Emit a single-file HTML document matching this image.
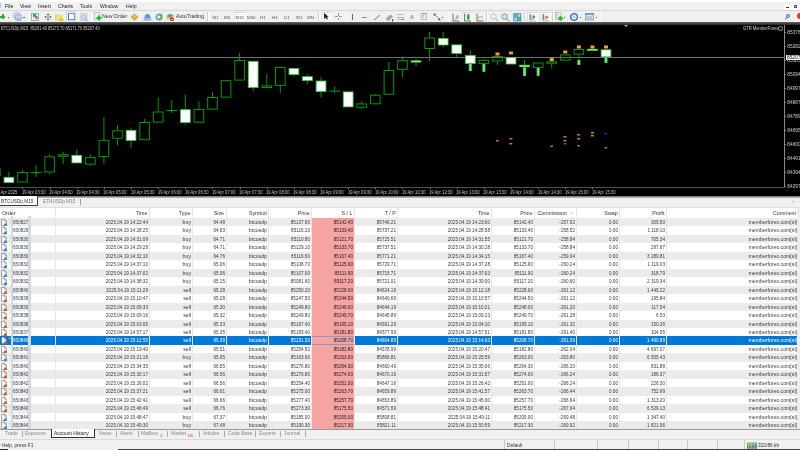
<!DOCTYPE html>
<html><head><meta charset="utf-8">
<style>
*{margin:0;padding:0;box-sizing:border-box}
html,body{width:800px;height:450px;overflow:hidden;background:#f0f0f0;font-family:"Liberation Sans", sans-serif;position:relative}
#root{position:absolute;left:0;top:0;width:800px;height:450px;overflow:hidden;will-change:transform}
.a{position:absolute}
#menu{position:absolute;left:0;top:0;width:800px;height:10.3px;background:linear-gradient(#fff 0,#fff 1.5px,#f0f0f0 2.5px)}
.mi{position:absolute;top:2.9px;font-size:5.6px;color:#1a1a1a;white-space:nowrap;transform:scaleX(0.92);transform-origin:0 0}
#tb{position:absolute;left:0;top:10.3px;width:800px;height:11.7px;background:#f0f0f0;border-top:0.8px solid #d6d6d6}
#frame{position:absolute;left:0;top:21.8px;width:800px;height:2.8px;background:linear-gradient(#6a6a6a,#3a3a3a 60%,#2a2a2a)}
#chart{position:absolute;left:0;top:24.6px;width:800px;height:171px;background:#000;overflow:hidden}
#chart svg{position:absolute;left:0;top:-24.6px}
.tlab{position:absolute;top:165.1px;font-size:4.6px;color:#c8c8c8;white-space:nowrap;transform:scaleX(0.9);transform-origin:0 0}
.tick{position:absolute;top:163px;width:0.8px;height:1.5px;background:#888}
.plab{position:absolute;left:787.3px;font-size:4.8px;color:#c8ccd0;white-space:nowrap}
.ptick{position:absolute;left:785px;width:1.3px;height:0.8px;background:#888}
#ctabs{position:absolute;left:0;top:195.5px;width:800px;height:11.5px;background:#f0f0f0}
.hd{position:absolute;height:10px;line-height:11.8px;font-size:5.3px;color:#333;text-align:right;white-space:nowrap}
.hsep{position:absolute;top:208px;width:0.7px;height:10px;background:#e6e6e6}
.vsep{position:absolute;top:218px;width:0.7px;height:211px;background:#e6e6e6}
.row{position:absolute;left:0;width:797.2px;height:8.46px}
.sl{position:absolute;left:311.6px;width:42px;height:8.46px;background:#f6a3a3}
.cell{position:absolute;height:8.5px;line-height:9.5px;font-size:5.3px;text-align:right;white-space:nowrap;transform:scaleX(0.87);transform-origin:100% 50%}
.doc{position:absolute;left:1.4px;width:4.4px;height:5.8px;background:#fff;border:0.7px solid #777}
.dot{position:absolute;left:3.6px;width:3px;height:3px;border-radius:50%}
.gbar{position:absolute;top:216.4px;height:212.5px;background:#d8d8d8}
.filt{position:absolute;font-size:4px;color:#999}
#btabs{position:absolute;left:0;top:428.7px;width:800px;height:10.3px;background:#f0f0f0;border-top:0.9px solid #9a9a9a}
.bt{position:absolute;top:430.4px;font-size:5.4px;color:#8a8a8a;white-space:nowrap;transform:scaleX(0.92);transform-origin:0 0}
.bsep{position:absolute;top:430.5px;width:0.7px;height:6px;background:#aaa}
#status{position:absolute;left:0;top:439px;width:800px;height:11px;background:#f0f0f0;border-top:0.7px solid #dadada}
.ssep{position:absolute;top:440px;width:0.7px;height:9px;background:#c8c8c8}
.st{position:absolute;top:441.8px;font-size:5.2px;color:#333;white-space:nowrap;transform:scaleX(0.93);transform-origin:0 0}
</style></head><body><div id="root">
<div id="menu"></div>
<div class="a" style="left:0;top:3px;width:1px;height:5px;background:#a8c8e8"></div><div class="mi" style="left:4.8px">File</div>
<div class="mi" style="left:19.8px">View</div>
<div class="mi" style="left:38px">Insert</div>
<div class="mi" style="left:58px">Charts</div>
<div class="mi" style="left:80px">Tools</div>
<div class="mi" style="left:99.5px">Window</div>
<div class="mi" style="left:125.5px">Help</div>
<div class="a" style="left:784px;top:4px;width:6.5px;height:5.5px;background:#fff"></div>
<div class="a" style="left:786px;top:7.2px;width:2.5px;height:0.8px;background:#333"></div>
<div class="a" style="left:792px;top:4px;width:7px;height:5.5px;background:#fff"></div>
<div class="a" style="left:794px;top:5.2px;width:3px;height:2.8px;border:0.7px solid #555"></div>
<div id="tb"></div>
<div class="a" style="left:0px;top:15.5px;width:5px;height:2px;background:#2cb52c;"></div><div class="a" style="left:1.5px;top:14px;width:2px;height:5px;background:#2cb52c;"></div><div class="a" style="left:7.5px;top:16.5px;width:1.5px;height:1.2px;background:#555;"></div><svg class="a" style="left:12.5px;top:12px" width="9" height="9"><rect x="0.8" y="0.8" width="5.5" height="5" rx="0.8" fill="#d8e6f4" stroke="#7aa0d0" stroke-width="0.6"/><rect x="2.5" y="2.8" width="5.8" height="5.6" rx="0.8" fill="#c4d8ee" stroke="#6a90c8" stroke-width="0.6"/><rect x="3.5" y="6" width="3.8" height="1.4" fill="#90b0d8"/></svg><div class="a" style="left:23px;top:16.5px;width:1.5px;height:1.2px;background:#555;"></div><div class="a" style="left:28.5px;top:12.3px;width:0.6px;height:8.5px;background:#cfcfcf;"></div><div class="a" style="left:29.1px;top:12.3px;width:0.6px;height:8.5px;background:#fdfdfd;"></div><div class="a" style="left:31px;top:12.5px;width:7.5px;height:8px;background:#e6eff8;border:0.7px solid #8ab0de"></div><div class="a" style="left:33px;top:14px;width:2.5px;height:2.5px;background:#3a3;"></div><div class="a" style="left:35px;top:16px;width:3px;height:3px;background:#e06030;border-radius:50%"></div><svg class="a" style="left:43.5px;top:12.5px" width="8" height="8"><path d="M4 0.3 L5.6 2 H2.4 Z M4 7.7 L5.6 6 H2.4 Z M0.3 4 L2 2.4 V5.6 Z M7.7 4 L6 2.4 V5.6 Z" fill="#666"/><path d="M4 2 V6 M2 4 H6" stroke="#888" stroke-width="0.8"/></svg><svg class="a" style="left:54.5px;top:12.5px" width="10" height="9"><path d="M0.5 1.5 H3 L4 2.5 H7 V7 H0.5 Z" fill="#f4e27a" stroke="#d8b840" stroke-width="0.5"/><path d="M6.5 4 L7.3 5.8 L9.2 6 L7.8 7.2 L8.2 9 L6.5 8 L4.8 9 L5.2 7.2 L3.8 6 L5.7 5.8 Z" fill="#f0c820"/></svg><div class="a" style="left:66px;top:11.3px;width:10.2px;height:9.8px;background:#f7f7f7;border:0.6px solid #d4d4d4"></div><div class="a" style="left:67.5px;top:12.8px;width:7.5px;height:7.5px;background:#f4f8ff;border:0.8px solid #6a9ad8;border-left:1.6px solid #3a78c8"></div><svg class="a" style="left:79.5px;top:12.5px" width="9" height="9"><rect x="0.5" y="0.5" width="6.5" height="7" fill="#eceef0" stroke="#b0b4b8" stroke-width="0.5"/><circle cx="3.8" cy="4.2" r="2.2" fill="#cfe2f6" stroke="#6a9ad0" stroke-width="0.6"/><path d="M5.4 5.8 L7.8 8.2" stroke="#d0a040" stroke-width="1"/></svg><div class="a" style="left:90.5px;top:12.3px;width:0.6px;height:8.5px;background:#cfcfcf;"></div><div class="a" style="left:91.1px;top:12.3px;width:0.6px;height:8.5px;background:#fdfdfd;"></div><svg class="a" style="left:93.5px;top:12.3px" width="9" height="9"><rect x="0.5" y="0.5" width="5.5" height="7" fill="#f0f0f0" stroke="#999" stroke-width="0.5"/><path d="M5 3.5 V8.5 M2.5 6 H7.5" stroke="#22c022" stroke-width="2"/></svg><div class="a" style="left:102px;top:13.4px;font-size:5.6px;color:#333;white-space:nowrap;transform:scaleX(0.93);transform-origin:0 0">New Order</div><svg class="a" style="left:130px;top:12.5px" width="9" height="8"><path d="M1 4 L4.5 1 L8 4 L4.5 7.5 Z" fill="#e0b030" stroke="#b08020" stroke-width="0.5"/><path d="M2.5 4 L4.5 2.5 L6.5 4" fill="none" stroke="#fff0a0" stroke-width="0.6"/></svg><svg class="a" style="left:143px;top:12.5px" width="9" height="8"><path d="M1.5 5 Q1.5 1 4.5 1 Q7.5 1 7.5 5 Z" fill="#4aa0e8"/><rect x="0.8" y="5" width="7.4" height="2.4" rx="1" fill="#b8c0cc" stroke="#8890a0" stroke-width="0.4"/></svg><svg class="a" style="left:154.5px;top:12.5px" width="9" height="8"><circle cx="4" cy="4" r="3.5" fill="#7fa8d8"/><path d="M4 0.5 A3.5 3.5 0 0 1 4 7.5 Z" fill="#5ab05a"/><circle cx="4" cy="4" r="1.5" fill="#e8f0f8"/></svg><svg class="a" style="left:166px;top:12.5px" width="9" height="9"><path d="M0.5 3 L4 0.8 L7.5 2.5 L7.5 6.5 L0.5 6.5 Z" fill="#e8c840"/><path d="M0.5 3 L4 0.8 L7.5 2.5 L4 4.5 Z" fill="#4a9ae0"/><circle cx="6" cy="6.3" r="2" fill="#d83020"/><rect x="5" y="6" width="2" height="0.6" fill="#fff"/></svg><div class="a" style="left:176px;top:13.4px;font-size:5.6px;color:#333;white-space:nowrap;transform:scaleX(0.93);transform-origin:0 0">AutoTrading</div><div class="a" style="left:207.3px;top:12.3px;width:0.6px;height:8.5px;background:#cfcfcf;"></div><div class="a" style="left:207.9px;top:12.3px;width:0.6px;height:8.5px;background:#fdfdfd;"></div><div class="a" style="left:208.7px;top:12.3px;width:0.6px;height:8.5px;background:#cfcfcf;"></div><div class="a" style="left:209.29999999999998px;top:12.3px;width:0.6px;height:8.5px;background:#fdfdfd;"></div><div class="a" style="left:212.5px;top:14.8px;font-size:4.4px;color:#555;white-space:nowrap;transform:scaleX(1);transform-origin:0 0">M1</div><div class="a" style="left:224px;top:14.8px;font-size:4.4px;color:#555;white-space:nowrap;transform:scaleX(1);transform-origin:0 0">M5</div><div class="a" style="left:234px;top:11.5px;width:11.5px;height:9.5px;background:#f8f8f8;border-top:0.6px solid #d8d8d8;border-left:0.5px solid #e0e0e0"></div><div class="a" style="left:235.5px;top:14.8px;font-size:4.4px;color:#555;white-space:nowrap;transform:scaleX(1);transform-origin:0 0">M15</div><div class="a" style="left:247px;top:14.8px;font-size:4.4px;color:#555;white-space:nowrap;transform:scaleX(1);transform-origin:0 0">M30</div><div class="a" style="left:260px;top:14.8px;font-size:4.4px;color:#555;white-space:nowrap;transform:scaleX(1);transform-origin:0 0">H1</div><div class="a" style="left:272px;top:14.8px;font-size:4.4px;color:#555;white-space:nowrap;transform:scaleX(1);transform-origin:0 0">H4</div><div class="a" style="left:284px;top:14.8px;font-size:4.4px;color:#555;white-space:nowrap;transform:scaleX(1);transform-origin:0 0">D1</div><div class="a" style="left:296px;top:14.8px;font-size:4.4px;color:#555;white-space:nowrap;transform:scaleX(1);transform-origin:0 0">W1</div><div class="a" style="left:307px;top:14.8px;font-size:4.4px;color:#555;white-space:nowrap;transform:scaleX(1);transform-origin:0 0">MN</div><div class="a" style="left:318.3px;top:12.3px;width:0.6px;height:8.5px;background:#cfcfcf;"></div><div class="a" style="left:318.90000000000003px;top:12.3px;width:0.6px;height:8.5px;background:#fdfdfd;"></div><div class="a" style="left:319.7px;top:12.3px;width:0.6px;height:8.5px;background:#cfcfcf;"></div><div class="a" style="left:320.3px;top:12.3px;width:0.6px;height:8.5px;background:#fdfdfd;"></div><div class="a" style="left:321px;top:11.5px;width:10.5px;height:9.5px;background:#f8f8f8;border-top:0.6px solid #dadada;border-left:0.5px solid #e0e0e0"></div><svg class="a" style="left:323px;top:13px" width="6" height="7"><path d="M1 0 L1 6 L2.5 4.5 L4 6.5 L5 6 L3.8 4 L5.5 3.8 Z" fill="#222"/></svg><div class="a" style="left:335px;top:16.3px;width:2.6px;height:0.8px;background:#999;"></div><div class="a" style="left:339.4px;top:16.3px;width:2.6px;height:0.8px;background:#999;"></div><div class="a" style="left:338.1px;top:13.3px;width:0.8px;height:2.6px;background:#999;"></div><div class="a" style="left:338.1px;top:17.6px;width:0.8px;height:2.6px;background:#999;"></div><div class="a" style="left:345.5px;top:12.3px;width:0.6px;height:8.5px;background:#cfcfcf;"></div><div class="a" style="left:346.1px;top:12.3px;width:0.6px;height:8.5px;background:#fdfdfd;"></div><div class="a" style="left:352.2px;top:14.2px;width:0.8px;height:5.8px;background:#666;"></div><div class="a" style="left:362.3px;top:16.8px;width:5px;height:0.8px;background:#888;"></div><svg class="a" style="left:373px;top:13.5px" width="8" height="7"><path d="M1 6 L7 1" stroke="#555" stroke-width="0.8"/></svg><svg class="a" style="left:384.5px;top:12.5px" width="9" height="9"><path d="M0.5 6 L5 1.5 L8 3.5 L3.5 8 Z" fill="#9a9a9a"/><path d="M1.5 5.5 L5 2 M3 7 L6.5 3.5" stroke="#ddd" stroke-width="0.5"/><rect x="7" y="6" width="1.2" height="2.5" fill="#555"/></svg><div class="a" style="left:397px;top:14px;width:6.5px;height:0.8px;background:#c0c0c0;"></div><div class="a" style="left:397px;top:16.5px;width:6.5px;height:0.8px;background:#b0b0b0;"></div><div class="a" style="left:397px;top:19px;width:5px;height:0.8px;background:#c0c0c0;"></div><div class="a" style="left:402px;top:18.5px;width:1.5px;height:1.5px;background:#666;"></div><div class="a" style="left:410px;top:13.5px;font-size:5.2px;color:#666;white-space:nowrap;transform:scaleX(1);transform-origin:0 0">A</div><div class="a" style="left:421px;top:13.3px;width:6px;height:6.5px;background:#f0f0f0;border:0.6px solid #bbb;border-top:0.6px solid #999"></div><div class="a" style="left:422.6px;top:14.2px;font-size:4.4px;color:#777;white-space:nowrap;transform:scaleX(1);transform-origin:0 0">T</div><svg class="a" style="left:432.5px;top:12.5px" width="8" height="8"><path d="M1.2 1.2 L6.8 6.8" stroke="#888" stroke-width="1"/><path d="M0.5 0.5 L3 1 L1 3 Z M7.5 7.5 L5 7 L7 5 Z" fill="#444"/></svg><div class="a" style="left:441.8px;top:16.6px;width:1.3px;height:1.3px;background:#444;"></div><div class="a" style="left:447.5px;top:12.3px;width:0.6px;height:8.5px;background:#cfcfcf;"></div><div class="a" style="left:448.1px;top:12.3px;width:0.6px;height:8.5px;background:#fdfdfd;"></div><svg class="a" style="left:451.5px;top:12.5px" width="8" height="9"><path d="M1 0.5 V8 H7.5" fill="none" stroke="#555" stroke-width="0.8"/><path d="M3.5 6.5 L5.5 2 M5 6 L6.5 3" stroke="#4ab04a" stroke-width="0.8"/></svg><div class="a" style="left:462px;top:11.5px;width:10.5px;height:9.5px;background:#f8f8f8;border-top:0.6px solid #dadada;border-left:0.5px solid #e0e0e0"></div><svg class="a" style="left:462.5px;top:12.5px" width="9" height="9"><path d="M1.5 0.5 V8 H8" fill="none" stroke="#555" stroke-width="0.8"/><rect x="3.8" y="1.5" width="2.8" height="5" fill="#30b030"/><path d="M5.2 0.5 V7.5" stroke="#30b030" stroke-width="0.6"/></svg><svg class="a" style="left:475.5px;top:12.5px" width="8" height="9"><path d="M1 0.5 V8 H7.5" fill="none" stroke="#555" stroke-width="0.8"/><path d="M2 6 Q3.5 1 7 5" fill="none" stroke="#4ab04a" stroke-width="0.7"/></svg><div class="a" style="left:486px;top:12.3px;width:0.6px;height:8.5px;background:#cfcfcf;"></div><div class="a" style="left:486.6px;top:12.3px;width:0.6px;height:8.5px;background:#fdfdfd;"></div><svg class="a" style="left:489.5px;top:12.5px" width="9" height="9"><circle cx="3.5" cy="3.5" r="2.6" fill="#f4f4f4" stroke="#bbb" stroke-width="0.9"/><path d="M5.5 5.5 L8 8" stroke="#bbb" stroke-width="1.1"/></svg><svg class="a" style="left:500.5px;top:12.5px" width="9" height="9"><circle cx="3.6" cy="3.6" r="2.7" fill="#d4e8f8" stroke="#4a90d0" stroke-width="0.9"/><path d="M5.6 5.6 L8.2 8.2" stroke="#d0a030" stroke-width="1.2"/></svg><svg class="a" style="left:512.5px;top:12.5px" width="9" height="9"><rect x="0.3" y="0.3" width="8" height="8" fill="#3a80d0"/><rect x="1" y="1" width="3" height="3" fill="#60c060"/><rect x="4.6" y="1" width="3" height="3" fill="#a8d0f0"/><rect x="1" y="4.6" width="3" height="3" fill="#a8d0f0"/><rect x="4.6" y="4.6" width="3" height="3" fill="#60c060"/></svg><div class="a" style="left:524px;top:12.3px;width:0.6px;height:8.5px;background:#cfcfcf;"></div><div class="a" style="left:524.6px;top:12.3px;width:0.6px;height:8.5px;background:#fdfdfd;"></div><div class="a" style="left:527px;top:11.5px;width:10.5px;height:9.5px;background:#f8f8f8;border-top:0.6px solid #dadada;border-left:0.5px solid #e0e0e0"></div><svg class="a" style="left:528px;top:12.5px" width="9" height="9"><rect x="1.5" y="1" width="1.5" height="6" fill="#888"/><rect x="3.5" y="2.5" width="1.2" height="4.5" fill="#aaa"/><path d="M5 1.5 L7.5 4 L5 6.5 Z" fill="#30b030"/><path d="M1 8 H8" stroke="#999" stroke-width="0.6"/></svg><div class="a" style="left:540px;top:11.5px;width:10.5px;height:9.5px;background:#f8f8f8;border-top:0.6px solid #dadada;border-left:0.5px solid #e0e0e0"></div><svg class="a" style="left:541px;top:12.5px" width="9" height="9"><rect x="1.5" y="1" width="1.5" height="6" fill="#888"/><rect x="3.5" y="2.5" width="1.2" height="4.5" fill="#aaa"/><path d="M5 2.5 L7.8 4.2 L5 6 Z" fill="#e06030"/><path d="M1 8 H8" stroke="#999" stroke-width="0.6"/></svg><div class="a" style="left:552px;top:12.3px;width:0.6px;height:8.5px;background:#cfcfcf;"></div><div class="a" style="left:552.6px;top:12.3px;width:0.6px;height:8.5px;background:#fdfdfd;"></div><svg class="a" style="left:554.5px;top:12.3px" width="9" height="9"><rect x="0.5" y="0.5" width="5.5" height="7" fill="#eee" stroke="#999" stroke-width="0.5"/><path d="M2 1.5 V6" stroke="#888" stroke-width="0.6"/><path d="M5.5 4 V8.8 M3 6.4 H8" stroke="#22c022" stroke-width="2"/></svg><div class="a" style="left:563.5px;top:16.5px;width:1.3px;height:1.3px;background:#555;"></div><svg class="a" style="left:569.5px;top:12.5px" width="9" height="9"><circle cx="4" cy="4" r="3.4" fill="#dceaf8" stroke="#2a70c0" stroke-width="1.3"/><path d="M4 2.5 V4.2 L5 5" stroke="#666" stroke-width="0.5" fill="none"/></svg><div class="a" style="left:579.5px;top:16.5px;width:1.3px;height:1.3px;background:#555;"></div><svg class="a" style="left:585px;top:12.8px" width="9" height="8"><rect x="0.5" y="0.5" width="8" height="6.5" fill="#d8e8f8" stroke="#5a90d0" stroke-width="0.7"/><rect x="0.5" y="0.5" width="8" height="1.3" fill="#5a90d0"/><path d="M1.5 4 L3 3 L4.5 4.5 L7.5 3" stroke="#e06060" stroke-width="0.5" fill="none"/><path d="M1.5 5.5 L4 5 L7.5 5.5" stroke="#40a040" stroke-width="0.5" fill="none"/></svg><div class="a" style="left:595.5px;top:16.5px;width:1.3px;height:1.3px;background:#555;"></div><div class="a" style="left:599.5px;top:12.3px;width:0.6px;height:8.5px;background:#cfcfcf;"></div><div class="a" style="left:600.1px;top:12.3px;width:0.6px;height:8.5px;background:#fdfdfd;"></div><div class="a" style="left:786px;top:14px;width:4px;height:4px;background:transparent;border:1px solid #2a60c0;border-radius:50%"></div><div class="a" style="left:785px;top:18px;width:2px;height:1px;background:#2a60c0;transform:rotate(-45deg)"></div><div class="a" style="left:796.5px;top:13px;width:6px;height:6px;background:#e03a20;border-radius:50%"></div>
<div id="frame"></div>
<div id="chart">
<div class="a" style="left:1px;top:1.1px;font-size:4.6px;color:#d0d0d0;white-space:nowrap;transform:scaleX(0.86);transform-origin:0 0">BTCUSDp,M15&nbsp;&nbsp;85261.40 85273.70 85171.70 85207.40</div>
<div class="a" style="left:743px;top:1.4px;font-size:4.8px;color:#d0d0d0;white-space:nowrap;transform:scaleX(0.86);transform-origin:0 0">GTR MemberForex</div>
<div class="a" style="left:778px;top:1.5px;width:4.5px;height:4.5px;border:0.6px solid #999;border-radius:50%"></div>

<div class="a" style="left:0;top:32.5px;width:784.5px;height:0.8px;background:#6a7078"></div>
<div class="a" style="left:784.3px;top:0;width:0.9px;height:163.5px;background:#8a8a8a"></div>
<div class="a" style="left:0;top:162.7px;width:785px;height:1px;background:#505050"></div>
<div class="a" style="left:623.6px;top:0;width:0;height:0;border-left:2.6px solid transparent;border-right:2.6px solid transparent;border-top:2.6px solid #a8b4c0"></div>
<svg width="800" height="200">
<rect x="-9.44" y="169.00" width="9.60" height="6.90" fill="none" stroke="#009c00" stroke-width="1"/><line x1="8.93" y1="171.7" x2="8.93" y2="176.9" stroke="#009c00" stroke-width="1"/><rect x="4.03" y="177.30" width="9.80" height="5.20" fill="#fff" stroke="#3c3" stroke-width="0.8"/><line x1="22.50" y1="170.3" x2="22.50" y2="172.0" stroke="#009c00" stroke-width="1"/><rect x="17.70" y="172.50" width="9.60" height="9.50" fill="none" stroke="#009c00" stroke-width="1"/><line x1="36.07" y1="165.0" x2="36.07" y2="172.0" stroke="#009c00" stroke-width="1"/><line x1="36.07" y1="173.0" x2="36.07" y2="177.0" stroke="#009c00" stroke-width="1"/><rect x="31.27" y="172.50" width="9.60" height="0.10" fill="none" stroke="#009c00" stroke-width="1"/><line x1="49.64" y1="154.5" x2="49.64" y2="156.3" stroke="#009c00" stroke-width="1"/><line x1="49.64" y1="172.5" x2="49.64" y2="174.6" stroke="#009c00" stroke-width="1"/><rect x="44.84" y="156.80" width="9.60" height="15.20" fill="none" stroke="#009c00" stroke-width="1"/><line x1="63.21" y1="151.9" x2="63.21" y2="154.2" stroke="#009c00" stroke-width="1"/><line x1="63.21" y1="156.8" x2="63.21" y2="164.1" stroke="#009c00" stroke-width="1"/><rect x="58.41" y="154.70" width="9.60" height="1.60" fill="none" stroke="#009c00" stroke-width="1"/><line x1="76.78" y1="149.3" x2="76.78" y2="154.9" stroke="#009c00" stroke-width="1"/><rect x="71.88" y="155.30" width="9.80" height="7.60" fill="#fff" stroke="#3c3" stroke-width="0.8"/><line x1="90.35" y1="154.5" x2="90.35" y2="157.1" stroke="#009c00" stroke-width="1"/><line x1="90.35" y1="164.7" x2="90.35" y2="166.0" stroke="#009c00" stroke-width="1"/><rect x="85.55" y="157.60" width="9.60" height="6.60" fill="none" stroke="#009c00" stroke-width="1"/><line x1="103.92" y1="117.1" x2="103.92" y2="139.8" stroke="#009c00" stroke-width="1"/><line x1="103.92" y1="157.1" x2="103.92" y2="164.1" stroke="#009c00" stroke-width="1"/><rect x="99.12" y="140.30" width="9.60" height="16.30" fill="none" stroke="#009c00" stroke-width="1"/><line x1="117.49" y1="125.0" x2="117.49" y2="130.3" stroke="#009c00" stroke-width="1"/><line x1="117.49" y1="138.7" x2="117.49" y2="145.1" stroke="#009c00" stroke-width="1"/><rect x="112.69" y="130.80" width="9.60" height="7.40" fill="none" stroke="#009c00" stroke-width="1"/><line x1="131.06" y1="127.6" x2="131.06" y2="129.9" stroke="#009c00" stroke-width="1"/><line x1="131.06" y1="140.8" x2="131.06" y2="147.8" stroke="#009c00" stroke-width="1"/><rect x="126.16" y="130.30" width="9.80" height="10.10" fill="#fff" stroke="#3c3" stroke-width="0.8"/><line x1="144.63" y1="118.9" x2="144.63" y2="122.0" stroke="#009c00" stroke-width="1"/><rect x="139.83" y="122.50" width="9.60" height="17.20" fill="none" stroke="#009c00" stroke-width="1"/><line x1="158.20" y1="97.4" x2="158.20" y2="111.5" stroke="#009c00" stroke-width="1"/><rect x="153.40" y="112.00" width="9.60" height="10.10" fill="none" stroke="#009c00" stroke-width="1"/><line x1="171.77" y1="100.2" x2="171.77" y2="110.0" stroke="#009c00" stroke-width="1"/><line x1="171.77" y1="111.0" x2="171.77" y2="113.1" stroke="#009c00" stroke-width="1"/><rect x="166.97" y="110.50" width="9.60" height="0.10" fill="none" stroke="#009c00" stroke-width="1"/><line x1="185.34" y1="94.4" x2="185.34" y2="109.3" stroke="#009c00" stroke-width="1"/><line x1="185.34" y1="122.9" x2="185.34" y2="124.5" stroke="#009c00" stroke-width="1"/><rect x="180.44" y="109.70" width="9.80" height="12.80" fill="#fff" stroke="#3c3" stroke-width="0.8"/><line x1="198.91" y1="101.4" x2="198.91" y2="108.9" stroke="#009c00" stroke-width="1"/><rect x="194.11" y="109.40" width="9.60" height="12.80" fill="none" stroke="#009c00" stroke-width="1"/><line x1="212.48" y1="92.1" x2="212.48" y2="97.0" stroke="#009c00" stroke-width="1"/><rect x="207.68" y="97.50" width="9.60" height="11.60" fill="none" stroke="#009c00" stroke-width="1"/><rect x="221.25" y="80.60" width="9.60" height="16.50" fill="none" stroke="#009c00" stroke-width="1"/><line x1="239.62" y1="52.8" x2="239.62" y2="60.0" stroke="#009c00" stroke-width="1"/><rect x="234.82" y="60.50" width="9.60" height="19.60" fill="none" stroke="#009c00" stroke-width="1"/><line x1="253.19" y1="88.0" x2="253.19" y2="91.1" stroke="#009c00" stroke-width="1"/><rect x="248.29" y="61.30" width="9.80" height="26.30" fill="#fff" stroke="#3c3" stroke-width="0.8"/><line x1="266.76" y1="74.2" x2="266.76" y2="85.4" stroke="#009c00" stroke-width="1"/><rect x="261.96" y="85.90" width="9.60" height="1.60" fill="none" stroke="#009c00" stroke-width="1"/><line x1="280.33" y1="85.9" x2="280.33" y2="92.9" stroke="#009c00" stroke-width="1"/><rect x="275.53" y="67.50" width="9.60" height="17.90" fill="none" stroke="#009c00" stroke-width="1"/><line x1="293.90" y1="75.0" x2="293.90" y2="76.6" stroke="#009c00" stroke-width="1"/><rect x="289.00" y="68.40" width="9.80" height="6.20" fill="#fff" stroke="#3c3" stroke-width="0.8"/><line x1="307.47" y1="74.5" x2="307.47" y2="76.3" stroke="#009c00" stroke-width="1"/><line x1="307.47" y1="81.0" x2="307.47" y2="83.8" stroke="#009c00" stroke-width="1"/><rect x="302.57" y="76.70" width="9.80" height="3.90" fill="#fff" stroke="#3c3" stroke-width="0.8"/><line x1="321.04" y1="77.1" x2="321.04" y2="80.6" stroke="#009c00" stroke-width="1"/><line x1="321.04" y1="92.0" x2="321.04" y2="97.6" stroke="#009c00" stroke-width="1"/><rect x="316.14" y="81.00" width="9.80" height="10.60" fill="#fff" stroke="#3c3" stroke-width="0.8"/><line x1="334.61" y1="86.3" x2="334.61" y2="90.5" stroke="#009c00" stroke-width="1"/><line x1="334.61" y1="91.5" x2="334.61" y2="93.3" stroke="#009c00" stroke-width="1"/><rect x="329.81" y="91.00" width="9.60" height="0.10" fill="none" stroke="#009c00" stroke-width="1"/><rect x="343.28" y="91.90" width="9.80" height="15.00" fill="#fff" stroke="#3c3" stroke-width="0.8"/><line x1="361.75" y1="101.1" x2="361.75" y2="103.4" stroke="#009c00" stroke-width="1"/><line x1="361.75" y1="107.8" x2="361.75" y2="109.0" stroke="#009c00" stroke-width="1"/><rect x="356.95" y="103.90" width="9.60" height="3.40" fill="none" stroke="#009c00" stroke-width="1"/><line x1="375.32" y1="93.8" x2="375.32" y2="94.7" stroke="#009c00" stroke-width="1"/><rect x="370.52" y="95.20" width="9.60" height="8.60" fill="none" stroke="#009c00" stroke-width="1"/><line x1="388.89" y1="62.1" x2="388.89" y2="70.0" stroke="#009c00" stroke-width="1"/><rect x="384.09" y="70.50" width="9.60" height="23.70" fill="none" stroke="#009c00" stroke-width="1"/><line x1="402.46" y1="56.4" x2="402.46" y2="60.2" stroke="#009c00" stroke-width="1"/><line x1="402.46" y1="69.9" x2="402.46" y2="77.3" stroke="#009c00" stroke-width="1"/><rect x="397.66" y="60.70" width="9.60" height="8.70" fill="none" stroke="#009c00" stroke-width="1"/><line x1="416.03" y1="58.7" x2="416.03" y2="60.4" stroke="#009c00" stroke-width="1"/><line x1="416.03" y1="62.5" x2="416.03" y2="66.0" stroke="#009c00" stroke-width="1"/><rect x="411.13" y="60.80" width="9.80" height="1.30" fill="#fff" stroke="#3c3" stroke-width="0.8"/><line x1="429.60" y1="31.9" x2="429.60" y2="37.5" stroke="#009c00" stroke-width="1"/><line x1="429.60" y1="49.0" x2="429.60" y2="61.1" stroke="#009c00" stroke-width="1"/><rect x="424.80" y="38.00" width="9.60" height="10.50" fill="none" stroke="#009c00" stroke-width="1"/><line x1="443.17" y1="31.9" x2="443.17" y2="38.0" stroke="#009c00" stroke-width="1"/><line x1="443.17" y1="45.4" x2="443.17" y2="47.6" stroke="#009c00" stroke-width="1"/><rect x="438.27" y="38.40" width="9.80" height="6.60" fill="#fff" stroke="#3c3" stroke-width="0.8"/><line x1="456.74" y1="53.8" x2="456.74" y2="57.1" stroke="#009c00" stroke-width="1"/><rect x="451.84" y="44.90" width="9.80" height="8.50" fill="#fff" stroke="#3c3" stroke-width="0.8"/><line x1="470.31" y1="50.3" x2="470.31" y2="55.0" stroke="#009c00" stroke-width="1"/><rect x="465.41" y="55.40" width="9.80" height="8.20" fill="#fff" stroke="#3c3" stroke-width="0.8"/><line x1="483.88" y1="58.75" x2="483.88" y2="59.75" stroke="#009c00" stroke-width="1"/><rect x="479.08" y="60.25" width="9.60" height="3.35" fill="none" stroke="#009c00" stroke-width="1"/><line x1="497.45" y1="61.5" x2="497.45" y2="65.0" stroke="#009c00" stroke-width="1"/><rect x="492.65" y="56.50" width="9.60" height="4.50" fill="none" stroke="#009c00" stroke-width="1"/><rect x="506.12" y="57.50" width="9.80" height="6.50" fill="#fff" stroke="#3c3" stroke-width="0.8"/><line x1="524.59" y1="59.75" x2="524.59" y2="64.75" stroke="#009c00" stroke-width="1"/><rect x="519.69" y="65.15" width="9.80" height="1.70" fill="#fff" stroke="#3c3" stroke-width="0.8"/><rect x="533.36" y="63.00" width="9.60" height="4.60" fill="none" stroke="#009c00" stroke-width="1"/><line x1="551.73" y1="63.75" x2="551.73" y2="68.5" stroke="#009c00" stroke-width="1"/><rect x="546.93" y="61.75" width="9.60" height="1.50" fill="none" stroke="#009c00" stroke-width="1"/><rect x="560.50" y="54.90" width="9.60" height="5.20" fill="none" stroke="#009c00" stroke-width="1"/><line x1="578.87" y1="54.6" x2="578.87" y2="60.0" stroke="#009c00" stroke-width="1"/><rect x="574.07" y="49.50" width="9.60" height="4.60" fill="none" stroke="#009c00" stroke-width="1"/><rect x="587.54" y="49.15" width="9.80" height="1.45" fill="#fff" stroke="#3c3" stroke-width="0.8"/><rect x="601.11" y="49.80" width="9.80" height="7.05" fill="#fff" stroke="#3c3" stroke-width="0.8"/><rect x="495.45" y="52.5" width="4" height="3" fill="#f0a030"/><rect x="509.02" y="51.5" width="4" height="3" fill="#f0a030"/><rect x="549.73" y="58" width="4" height="3" fill="#f0a030"/><rect x="563.30" y="50.5" width="4" height="3" fill="#f0a030"/><rect x="576.87" y="45.5" width="4" height="3" fill="#f0a030"/><rect x="590.44" y="45.5" width="4" height="3" fill="#f0a030"/><rect x="604.01" y="45.5" width="4" height="3" fill="#f0a030"/><rect x="468.81" y="64" width="3" height="7" fill="#4d4"/><rect x="469.51" y="65" width="1.6" height="0.8" fill="#cfc"/><rect x="469.51" y="67" width="1.6" height="0.8" fill="#cfc"/><rect x="469.51" y="69" width="1.6" height="0.8" fill="#cfc"/><rect x="482.38" y="64" width="3" height="8" fill="#4d4"/><rect x="483.08" y="65" width="1.6" height="0.8" fill="#cfc"/><rect x="483.08" y="67" width="1.6" height="0.8" fill="#cfc"/><rect x="483.08" y="69" width="1.6" height="0.8" fill="#cfc"/><rect x="523.09" y="67.5" width="3" height="8.5" fill="#4d4"/><rect x="523.79" y="68" width="1.6" height="0.8" fill="#cfc"/><rect x="523.79" y="70" width="1.6" height="0.8" fill="#cfc"/><rect x="523.79" y="72" width="1.6" height="0.8" fill="#cfc"/><rect x="523.79" y="74" width="1.6" height="0.8" fill="#cfc"/><rect x="536.66" y="68" width="3" height="8" fill="#4d4"/><rect x="537.36" y="69" width="1.6" height="0.8" fill="#cfc"/><rect x="537.36" y="71" width="1.6" height="0.8" fill="#cfc"/><rect x="537.36" y="73" width="1.6" height="0.8" fill="#cfc"/><rect x="577.37" y="60" width="3" height="5" fill="#4d4"/><rect x="578.07" y="61" width="1.6" height="0.8" fill="#cfc"/><rect x="578.07" y="63" width="1.6" height="0.8" fill="#cfc"/><rect x="604.51" y="57.5" width="3" height="5.5" fill="#4d4"/><rect x="605.21" y="58" width="1.6" height="0.8" fill="#cfc"/><rect x="605.21" y="60" width="1.6" height="0.8" fill="#cfc"/><rect x="495.9" y="140" width="3" height="1.5" fill="#c07020"/><rect x="509.3" y="138" width="3" height="1.5" fill="#c08020"/><rect x="509.3" y="143" width="3" height="1.5" fill="#c08020"/><rect x="550.1" y="145.5" width="3" height="1.5" fill="#a07030"/><rect x="563.5" y="136" width="3" height="1.5" fill="#c08020"/><rect x="563.5" y="140" width="3" height="1.5" fill="#c08020"/><rect x="563.5" y="143" width="3" height="1.5" fill="#5050c0"/><rect x="577.1" y="134" width="3" height="1.5" fill="#c08020"/><rect x="577.1" y="138" width="3" height="1.5" fill="#c08020"/><rect x="577.1" y="145" width="3" height="1.5" fill="#a07030"/><rect x="590.9" y="132" width="3" height="1.5" fill="#d09030"/><rect x="590.9" y="135" width="3" height="1.5" fill="#c08020"/><rect x="604.3" y="133" width="3" height="1.5" fill="#3030a0"/><rect x="604.3" y="147" width="3" height="1.5" fill="#a07030"/>
</svg>
<div class="tlab" style="left:-5px">19 Apr 2025</div><div class="tick" style="left:22.4px"></div><div class="tlab" style="left:21.9px">19 Apr 03:30</div><div class="tick" style="left:49.5px"></div><div class="tlab" style="left:49.0px">19 Apr 04:00</div><div class="tick" style="left:76.7px"></div><div class="tlab" style="left:76.2px">19 Apr 04:30</div><div class="tick" style="left:103.8px"></div><div class="tlab" style="left:103.3px">19 Apr 05:00</div><div class="tick" style="left:131.0px"></div><div class="tlab" style="left:130.5px">19 Apr 05:30</div><div class="tick" style="left:158.1px"></div><div class="tlab" style="left:157.6px">19 Apr 06:00</div><div class="tick" style="left:185.2px"></div><div class="tlab" style="left:184.7px">19 Apr 06:30</div><div class="tick" style="left:212.4px"></div><div class="tlab" style="left:211.9px">19 Apr 07:00</div><div class="tick" style="left:239.5px"></div><div class="tlab" style="left:239.0px">19 Apr 07:30</div><div class="tick" style="left:266.7px"></div><div class="tlab" style="left:266.2px">19 Apr 08:00</div><div class="tick" style="left:293.8px"></div><div class="tlab" style="left:293.3px">19 Apr 08:30</div><div class="tick" style="left:320.9px"></div><div class="tlab" style="left:320.4px">19 Apr 09:00</div><div class="tick" style="left:348.1px"></div><div class="tlab" style="left:347.6px">19 Apr 09:30</div><div class="tick" style="left:375.2px"></div><div class="tlab" style="left:374.7px">19 Apr 10:00</div><div class="tick" style="left:402.4px"></div><div class="tlab" style="left:401.9px">19 Apr 10:30</div><div class="tick" style="left:429.5px"></div><div class="tlab" style="left:429.0px">19 Apr 12:30</div><div class="tick" style="left:456.6px"></div><div class="tlab" style="left:456.1px">19 Apr 13:00</div><div class="tick" style="left:483.8px"></div><div class="tlab" style="left:483.3px">19 Apr 13:30</div><div class="tick" style="left:510.9px"></div><div class="tlab" style="left:510.4px">19 Apr 14:00</div><div class="tick" style="left:538.1px"></div><div class="tlab" style="left:537.6px">19 Apr 14:30</div><div class="tick" style="left:565.2px"></div><div class="tlab" style="left:564.7px">19 Apr 15:00</div><div class="tick" style="left:592.3px"></div><div class="tlab" style="left:591.8px">19 Apr 15:30</div>
<div class="ptick" style="top:7.8px"></div><div class="plab" style="top:5.7px">85378.10</div><div class="ptick" style="top:21.7px"></div><div class="plab" style="top:19.6px">85282.20</div><div class="ptick" style="top:35.7px"></div><div class="plab" style="top:33.6px">85185.40</div><div class="ptick" style="top:49.6px"></div><div class="plab" style="top:47.5px">85094.70</div><div class="ptick" style="top:63.6px"></div><div class="plab" style="top:61.5px">84997.30</div><div class="ptick" style="top:77.6px"></div><div class="plab" style="top:75.5px">84887.60</div><div class="ptick" style="top:91.5px"></div><div class="plab" style="top:89.4px">84789.10</div><div class="ptick" style="top:105.4px"></div><div class="plab" style="top:103.3px">84695.40</div><div class="ptick" style="top:119.4px"></div><div class="plab" style="top:117.3px">84600.80</div><div class="ptick" style="top:133.3px"></div><div class="plab" style="top:131.2px">84491.30</div><div class="ptick" style="top:147.3px"></div><div class="plab" style="top:145.2px">84394.40</div><div class="ptick" style="top:161.2px"></div><div class="plab" style="top:159.2px">84297.80</div>
<div class="a" style="left:786px;top:30.8px;width:16px;height:4.2px;background:#fff"></div>
<div class="a" style="left:787px;top:30px;font-size:4.8px;color:#000;white-space:nowrap">85207.40</div>
</div>
<div id="ctabs"></div>
<div class="a" style="left:38px;top:195.6px;width:762px;height:2px;background:linear-gradient(#6a6a6a,#c8c8c8)"></div><div class="a" style="left:0;top:196.4px;width:38.2px;height:9.4px;background:#fff;border:0.9px solid #3a3a3a;border-left:none;border-top:none"></div>
<div class="a" style="left:1px;top:198.4px;font-size:5.6px;color:#333;white-space:nowrap;transform:scaleX(0.84);transform-origin:0 0">BTCUSDp,M15</div>
<div class="a" style="left:43px;top:198.4px;font-size:5.6px;color:#858585;white-space:nowrap;transform:scaleX(0.84);transform-origin:0 0">ETHUSDp,M15</div>
<div class="a" style="left:80px;top:198.5px;width:0.7px;height:6.5px;background:#999"></div>
<div class="a" style="left:793px;top:199px;font-size:4.5px;color:#777">&lsaquo;</div>
<div class="a" style="left:0;top:207px;width:800px;height:11px;background:#fff;border-top:0.6px solid #e0e0e0"></div>
<div class="hd" style="left:2px;top:207.5px;width:50px;text-align:left">Order</div><div class="hd" style="left:87.40px;top:207.5px;width:60px">Time</div><div class="hd" style="left:130.40px;top:207.5px;width:60px">Type</div><div class="hd" style="left:164.00px;top:207.5px;width:60px">Size</div><div class="hd" style="left:206.60px;top:207.5px;width:60px">Symbol</div><div class="hd" style="left:249.75px;top:207.5px;width:60px">Price</div><div class="hd" style="left:292.50px;top:207.5px;width:60px">S / L</div><div class="hd" style="left:335.75px;top:207.5px;width:60px">T / P</div><div class="hd" style="left:429.50px;top:207.5px;width:60px">Time</div><div class="hd" style="left:472.40px;top:207.5px;width:60px">Price</div><div class="hd" style="left:506.70px;top:207.5px;width:60px">Commission</div><div class="hd" style="left:557.60px;top:207.5px;width:60px">Swap</div><div class="hd" style="left:604.50px;top:207.5px;width:60px">Profit</div><div class="hd" style="left:736.00px;top:207.5px;width:60px">Comment</div><div class="hsep" style="left:55.00px"></div><div class="hsep" style="left:148.90px"></div><div class="hsep" style="left:191.90px"></div><div class="hsep" style="left:225.50px"></div><div class="hsep" style="left:268.10px"></div><div class="hsep" style="left:311.25px"></div><div class="hsep" style="left:354.00px"></div><div class="hsep" style="left:397.25px"></div><div class="hsep" style="left:491.00px"></div><div class="hsep" style="left:533.90px"></div><div class="hsep" style="left:576.20px"></div><div class="hsep" style="left:619.10px"></div><div class="hsep" style="left:666.00px"></div><div class="filt" style="left:570px;top:210.5px">&#x22A4;</div><div class="row" style="top:218.00px;background:#ebebeb"></div><div class="sl" style="top:218.00px"></div><div class="cell" style="left:13.3px;top:218.00px;width:40px;text-align:left;color:#34465a;transform-origin:0 50%">650827</div><div class="cell" style="left:78.10px;top:218.00px;width:70px;color:#3a3a3a">2025.04.19 14:22:44</div><div class="cell" style="left:121.10px;top:218.00px;width:70px;color:#3a3a3a;transform:scaleX(0.98)">buy</div><div class="cell" style="left:154.70px;top:218.00px;width:70px;color:#3a3a3a">64.48</div><div class="cell" style="left:197.30px;top:218.00px;width:70px;color:#3a3a3a;transform:scaleX(0.98)">btcusdp</div><div class="cell" style="left:240.45px;top:218.00px;width:70px;color:#3a3a3a">85137.60</div><div class="cell" style="left:283.20px;top:218.00px;width:70px;color:#222">85142.40</div><div class="cell" style="left:326.45px;top:218.00px;width:70px;color:#3a3a3a">85746.21</div><div class="cell" style="left:420.20px;top:218.00px;width:70px;color:#3a3a3a">2025.04.19 14:23:00</div><div class="cell" style="left:463.10px;top:218.00px;width:70px;color:#3a3a3a">85142.40</div><div class="cell" style="left:505.40px;top:218.00px;width:70px;color:#3a3a3a">-257.92</div><div class="cell" style="left:548.30px;top:218.00px;width:70px;color:#3a3a3a">0.00</div><div class="cell" style="left:595.20px;top:218.00px;width:70px;color:#3a3a3a">309.50</div><div class="cell" style="left:726.70px;top:218.00px;width:70px;color:#3a3a3a;transform:scaleX(0.98)">memberforex.com[sl]</div><svg class="a" style="left:0;top:218.00px" width="10" height="9"><path d="M1.6 1.2 H4.6 L6.2 2.8 V7.6 H1.6 Z" fill="#fff" stroke="#6a6a6a" stroke-width="0.65"/><path d="M4.4 1.2 V3 H6.2" fill="none" stroke="#6a6a6a" stroke-width="0.5"/><circle cx="5.5" cy="6.9" r="1.55" fill="#2a8ae0"/><rect x="9" y="1.3" width="1" height="1.8" fill="#e6d9a0"/></svg><div class="row" style="top:226.46px;background:#ffffff"></div><div class="sl" style="top:226.46px"></div><div class="cell" style="left:13.3px;top:226.46px;width:40px;text-align:left;color:#34465a;transform-origin:0 50%">650829</div><div class="cell" style="left:78.10px;top:226.46px;width:70px;color:#3a3a3a">2025.04.19 14:28:25</div><div class="cell" style="left:121.10px;top:226.46px;width:70px;color:#3a3a3a;transform:scaleX(0.98)">buy</div><div class="cell" style="left:154.70px;top:226.46px;width:70px;color:#3a3a3a">64.63</div><div class="cell" style="left:197.30px;top:226.46px;width:70px;color:#3a3a3a;transform:scaleX(0.98)">btcusdp</div><div class="cell" style="left:240.45px;top:226.46px;width:70px;color:#3a3a3a">85116.10</div><div class="cell" style="left:283.20px;top:226.46px;width:70px;color:#222">85133.40</div><div class="cell" style="left:326.45px;top:226.46px;width:70px;color:#3a3a3a">85737.21</div><div class="cell" style="left:420.20px;top:226.46px;width:70px;color:#3a3a3a">2025.04.19 14:28:58</div><div class="cell" style="left:463.10px;top:226.46px;width:70px;color:#3a3a3a">85133.40</div><div class="cell" style="left:505.40px;top:226.46px;width:70px;color:#3a3a3a">-258.52</div><div class="cell" style="left:548.30px;top:226.46px;width:70px;color:#3a3a3a">0.00</div><div class="cell" style="left:595.20px;top:226.46px;width:70px;color:#3a3a3a">1 118.10</div><div class="cell" style="left:726.70px;top:226.46px;width:70px;color:#3a3a3a;transform:scaleX(0.98)">memberforex.com[sl]</div><svg class="a" style="left:0;top:226.46px" width="10" height="9"><path d="M1.6 1.2 H4.6 L6.2 2.8 V7.6 H1.6 Z" fill="#fff" stroke="#6a6a6a" stroke-width="0.65"/><path d="M4.4 1.2 V3 H6.2" fill="none" stroke="#6a6a6a" stroke-width="0.5"/><circle cx="5.5" cy="6.9" r="1.55" fill="#2a8ae0"/><rect x="9" y="1.3" width="1" height="1.8" fill="#e6d9a0"/></svg><div class="row" style="top:234.92px;background:#ebebeb"></div><div class="sl" style="top:234.92px"></div><div class="cell" style="left:13.3px;top:234.92px;width:40px;text-align:left;color:#34465a;transform-origin:0 50%">650830</div><div class="cell" style="left:78.10px;top:234.92px;width:70px;color:#3a3a3a">2025.04.19 14:31:09</div><div class="cell" style="left:121.10px;top:234.92px;width:70px;color:#3a3a3a;transform:scaleX(0.98)">buy</div><div class="cell" style="left:154.70px;top:234.92px;width:70px;color:#3a3a3a">64.71</div><div class="cell" style="left:197.30px;top:234.92px;width:70px;color:#3a3a3a;transform:scaleX(0.98)">btcusdp</div><div class="cell" style="left:240.45px;top:234.92px;width:70px;color:#3a3a3a">85110.80</div><div class="cell" style="left:283.20px;top:234.92px;width:70px;color:#222">85121.70</div><div class="cell" style="left:326.45px;top:234.92px;width:70px;color:#3a3a3a">85725.51</div><div class="cell" style="left:420.20px;top:234.92px;width:70px;color:#3a3a3a">2025.04.19 14:31:55</div><div class="cell" style="left:463.10px;top:234.92px;width:70px;color:#3a3a3a">85121.70</div><div class="cell" style="left:505.40px;top:234.92px;width:70px;color:#3a3a3a">-258.84</div><div class="cell" style="left:548.30px;top:234.92px;width:70px;color:#3a3a3a">0.00</div><div class="cell" style="left:595.20px;top:234.92px;width:70px;color:#3a3a3a">705.34</div><div class="cell" style="left:726.70px;top:234.92px;width:70px;color:#3a3a3a;transform:scaleX(0.98)">memberforex.com[sl]</div><svg class="a" style="left:0;top:234.92px" width="10" height="9"><path d="M1.6 1.2 H4.6 L6.2 2.8 V7.6 H1.6 Z" fill="#fff" stroke="#6a6a6a" stroke-width="0.65"/><path d="M4.4 1.2 V3 H6.2" fill="none" stroke="#6a6a6a" stroke-width="0.5"/><circle cx="5.5" cy="6.9" r="1.55" fill="#2a8ae0"/><rect x="9" y="1.3" width="1" height="1.8" fill="#e6d9a0"/></svg><div class="row" style="top:243.38px;background:#ffffff"></div><div class="sl" style="top:243.38px"></div><div class="cell" style="left:13.3px;top:243.38px;width:40px;text-align:left;color:#34465a;transform-origin:0 50%">650830</div><div class="cell" style="left:78.10px;top:243.38px;width:70px;color:#3a3a3a">2025.04.19 14:29:28</div><div class="cell" style="left:121.10px;top:243.38px;width:70px;color:#3a3a3a;transform:scaleX(0.98)">buy</div><div class="cell" style="left:154.70px;top:243.38px;width:70px;color:#3a3a3a">64.71</div><div class="cell" style="left:197.30px;top:243.38px;width:70px;color:#3a3a3a;transform:scaleX(0.98)">btcusdp</div><div class="cell" style="left:240.45px;top:243.38px;width:70px;color:#3a3a3a">85129.10</div><div class="cell" style="left:283.20px;top:243.38px;width:70px;color:#222">85133.70</div><div class="cell" style="left:326.45px;top:243.38px;width:70px;color:#3a3a3a">85737.51</div><div class="cell" style="left:420.20px;top:243.38px;width:70px;color:#3a3a3a">2025.04.19 14:30:28</div><div class="cell" style="left:463.10px;top:243.38px;width:70px;color:#3a3a3a">85133.70</div><div class="cell" style="left:505.40px;top:243.38px;width:70px;color:#3a3a3a">-258.84</div><div class="cell" style="left:548.30px;top:243.38px;width:70px;color:#3a3a3a">0.00</div><div class="cell" style="left:595.20px;top:243.38px;width:70px;color:#3a3a3a">297.67</div><div class="cell" style="left:726.70px;top:243.38px;width:70px;color:#3a3a3a;transform:scaleX(0.98)">memberforex.com[sl]</div><svg class="a" style="left:0;top:243.38px" width="10" height="9"><path d="M1.6 1.2 H4.6 L6.2 2.8 V7.6 H1.6 Z" fill="#fff" stroke="#6a6a6a" stroke-width="0.65"/><path d="M4.4 1.2 V3 H6.2" fill="none" stroke="#6a6a6a" stroke-width="0.5"/><circle cx="5.5" cy="6.9" r="1.55" fill="#2a8ae0"/><rect x="9" y="1.3" width="1" height="1.8" fill="#e6d9a0"/></svg><div class="row" style="top:251.84px;background:#ebebeb"></div><div class="sl" style="top:251.84px"></div><div class="cell" style="left:13.3px;top:251.84px;width:40px;text-align:left;color:#34465a;transform-origin:0 50%">650830</div><div class="cell" style="left:78.10px;top:251.84px;width:70px;color:#3a3a3a">2025.04.19 14:32:10</div><div class="cell" style="left:121.10px;top:251.84px;width:70px;color:#3a3a3a;transform:scaleX(0.98)">buy</div><div class="cell" style="left:154.70px;top:251.84px;width:70px;color:#3a3a3a">64.76</div><div class="cell" style="left:197.30px;top:251.84px;width:70px;color:#3a3a3a;transform:scaleX(0.98)">btcusdp</div><div class="cell" style="left:240.45px;top:251.84px;width:70px;color:#3a3a3a">85116.60</div><div class="cell" style="left:283.20px;top:251.84px;width:70px;color:#222">85167.40</div><div class="cell" style="left:326.45px;top:251.84px;width:70px;color:#3a3a3a">85771.21</div><div class="cell" style="left:420.20px;top:251.84px;width:70px;color:#3a3a3a">2025.04.19 14:34:15</div><div class="cell" style="left:463.10px;top:251.84px;width:70px;color:#3a3a3a">85167.40</div><div class="cell" style="left:505.40px;top:251.84px;width:70px;color:#3a3a3a">-259.04</div><div class="cell" style="left:548.30px;top:251.84px;width:70px;color:#3a3a3a">0.00</div><div class="cell" style="left:595.20px;top:251.84px;width:70px;color:#3a3a3a">3 289.81</div><div class="cell" style="left:726.70px;top:251.84px;width:70px;color:#3a3a3a;transform:scaleX(0.98)">memberforex.com[sl]</div><svg class="a" style="left:0;top:251.84px" width="10" height="9"><path d="M1.6 1.2 H4.6 L6.2 2.8 V7.6 H1.6 Z" fill="#fff" stroke="#6a6a6a" stroke-width="0.65"/><path d="M4.4 1.2 V3 H6.2" fill="none" stroke="#6a6a6a" stroke-width="0.5"/><circle cx="5.5" cy="6.9" r="1.55" fill="#2a8ae0"/><rect x="9" y="1.3" width="1" height="1.8" fill="#e6d9a0"/></svg><div class="row" style="top:260.30px;background:#ffffff"></div><div class="sl" style="top:260.30px"></div><div class="cell" style="left:13.3px;top:260.30px;width:40px;text-align:left;color:#34465a;transform-origin:0 50%">650832</div><div class="cell" style="left:78.10px;top:260.30px;width:70px;color:#3a3a3a">2025.04.19 14:37:10</div><div class="cell" style="left:121.10px;top:260.30px;width:70px;color:#3a3a3a;transform:scaleX(0.98)">buy</div><div class="cell" style="left:154.70px;top:260.30px;width:70px;color:#3a3a3a">65.06</div><div class="cell" style="left:197.30px;top:260.30px;width:70px;color:#3a3a3a;transform:scaleX(0.98)">btcusdp</div><div class="cell" style="left:240.45px;top:260.30px;width:70px;color:#3a3a3a">85108.70</div><div class="cell" style="left:283.20px;top:260.30px;width:70px;color:#222">85125.90</div><div class="cell" style="left:326.45px;top:260.30px;width:70px;color:#3a3a3a">85729.71</div><div class="cell" style="left:420.20px;top:260.30px;width:70px;color:#3a3a3a">2025.04.19 14:37:28</div><div class="cell" style="left:463.10px;top:260.30px;width:70px;color:#3a3a3a">85125.90</div><div class="cell" style="left:505.40px;top:260.30px;width:70px;color:#3a3a3a">-260.24</div><div class="cell" style="left:548.30px;top:260.30px;width:70px;color:#3a3a3a">0.00</div><div class="cell" style="left:595.20px;top:260.30px;width:70px;color:#3a3a3a">1 119.03</div><div class="cell" style="left:726.70px;top:260.30px;width:70px;color:#3a3a3a;transform:scaleX(0.98)">memberforex.com[sl]</div><svg class="a" style="left:0;top:260.30px" width="10" height="9"><path d="M1.6 1.2 H4.6 L6.2 2.8 V7.6 H1.6 Z" fill="#fff" stroke="#6a6a6a" stroke-width="0.65"/><path d="M4.4 1.2 V3 H6.2" fill="none" stroke="#6a6a6a" stroke-width="0.5"/><circle cx="5.5" cy="6.9" r="1.55" fill="#2a8ae0"/><rect x="9" y="1.3" width="1" height="1.8" fill="#e6d9a0"/></svg><div class="row" style="top:268.76px;background:#ebebeb"></div><div class="sl" style="top:268.76px"></div><div class="cell" style="left:13.3px;top:268.76px;width:40px;text-align:left;color:#34465a;transform-origin:0 50%">650832</div><div class="cell" style="left:78.10px;top:268.76px;width:70px;color:#3a3a3a">2025.04.19 14:37:02</div><div class="cell" style="left:121.10px;top:268.76px;width:70px;color:#3a3a3a;transform:scaleX(0.98)">buy</div><div class="cell" style="left:154.70px;top:268.76px;width:70px;color:#3a3a3a">65.06</div><div class="cell" style="left:197.30px;top:268.76px;width:70px;color:#3a3a3a;transform:scaleX(0.98)">btcusdp</div><div class="cell" style="left:240.45px;top:268.76px;width:70px;color:#3a3a3a">85107.00</div><div class="cell" style="left:283.20px;top:268.76px;width:70px;color:#222">85111.90</div><div class="cell" style="left:326.45px;top:268.76px;width:70px;color:#3a3a3a">85715.71</div><div class="cell" style="left:420.20px;top:268.76px;width:70px;color:#3a3a3a">2025.04.19 14:37:03</div><div class="cell" style="left:463.10px;top:268.76px;width:70px;color:#3a3a3a">85111.90</div><div class="cell" style="left:505.40px;top:268.76px;width:70px;color:#3a3a3a">-260.24</div><div class="cell" style="left:548.30px;top:268.76px;width:70px;color:#3a3a3a">0.00</div><div class="cell" style="left:595.20px;top:268.76px;width:70px;color:#3a3a3a">318.79</div><div class="cell" style="left:726.70px;top:268.76px;width:70px;color:#3a3a3a;transform:scaleX(0.98)">memberforex.com[sl]</div><svg class="a" style="left:0;top:268.76px" width="10" height="9"><path d="M1.6 1.2 H4.6 L6.2 2.8 V7.6 H1.6 Z" fill="#fff" stroke="#6a6a6a" stroke-width="0.65"/><path d="M4.4 1.2 V3 H6.2" fill="none" stroke="#6a6a6a" stroke-width="0.5"/><circle cx="5.5" cy="6.9" r="1.55" fill="#2a8ae0"/><rect x="9" y="1.3" width="1" height="1.8" fill="#e6d9a0"/></svg><div class="row" style="top:277.22px;background:#ffffff"></div><div class="sl" style="top:277.22px"></div><div class="cell" style="left:13.3px;top:277.22px;width:40px;text-align:left;color:#34465a;transform-origin:0 50%">650832</div><div class="cell" style="left:78.10px;top:277.22px;width:70px;color:#3a3a3a">2025.04.19 14:38:32</div><div class="cell" style="left:121.10px;top:277.22px;width:70px;color:#3a3a3a;transform:scaleX(0.98)">buy</div><div class="cell" style="left:154.70px;top:277.22px;width:70px;color:#3a3a3a">65.15</div><div class="cell" style="left:197.30px;top:277.22px;width:70px;color:#3a3a3a;transform:scaleX(0.98)">btcusdp</div><div class="cell" style="left:240.45px;top:277.22px;width:70px;color:#3a3a3a">85081.60</div><div class="cell" style="left:283.20px;top:277.22px;width:70px;color:#222">85117.20</div><div class="cell" style="left:326.45px;top:277.22px;width:70px;color:#3a3a3a">85721.01</div><div class="cell" style="left:420.20px;top:277.22px;width:70px;color:#3a3a3a">2025.04.19 14:39:00</div><div class="cell" style="left:463.10px;top:277.22px;width:70px;color:#3a3a3a">85117.20</div><div class="cell" style="left:505.40px;top:277.22px;width:70px;color:#3a3a3a">-260.60</div><div class="cell" style="left:548.30px;top:277.22px;width:70px;color:#3a3a3a">0.00</div><div class="cell" style="left:595.20px;top:277.22px;width:70px;color:#3a3a3a">2 319.34</div><div class="cell" style="left:726.70px;top:277.22px;width:70px;color:#3a3a3a;transform:scaleX(0.98)">memberforex.com[sl]</div><svg class="a" style="left:0;top:277.22px" width="10" height="9"><path d="M1.6 1.2 H4.6 L6.2 2.8 V7.6 H1.6 Z" fill="#fff" stroke="#6a6a6a" stroke-width="0.65"/><path d="M4.4 1.2 V3 H6.2" fill="none" stroke="#6a6a6a" stroke-width="0.5"/><circle cx="5.5" cy="6.9" r="1.55" fill="#2a8ae0"/><rect x="9" y="1.3" width="1" height="1.8" fill="#e6d9a0"/></svg><div class="row" style="top:285.68px;background:#ebebeb"></div><div class="sl" style="top:285.68px"></div><div class="cell" style="left:13.3px;top:285.68px;width:40px;text-align:left;color:#34465a;transform-origin:0 50%">650840</div><div class="cell" style="left:78.10px;top:285.68px;width:70px;color:#3a3a3a">2025.04.19 15:11:29</div><div class="cell" style="left:121.10px;top:285.68px;width:70px;color:#3a3a3a;transform:scaleX(0.98)">sell</div><div class="cell" style="left:154.70px;top:285.68px;width:70px;color:#3a3a3a">65.28</div><div class="cell" style="left:197.30px;top:285.68px;width:70px;color:#3a3a3a;transform:scaleX(0.98)">btcusdp</div><div class="cell" style="left:240.45px;top:285.68px;width:70px;color:#3a3a3a">85250.20</div><div class="cell" style="left:283.20px;top:285.68px;width:70px;color:#222">85228.00</div><div class="cell" style="left:326.45px;top:285.68px;width:70px;color:#3a3a3a">84624.19</div><div class="cell" style="left:420.20px;top:285.68px;width:70px;color:#3a3a3a">2025.04.19 15:12:18</div><div class="cell" style="left:463.10px;top:285.68px;width:70px;color:#3a3a3a">85228.00</div><div class="cell" style="left:505.40px;top:285.68px;width:70px;color:#3a3a3a">-261.12</div><div class="cell" style="left:548.30px;top:285.68px;width:70px;color:#3a3a3a">0.00</div><div class="cell" style="left:595.20px;top:285.68px;width:70px;color:#3a3a3a">1 449.22</div><div class="cell" style="left:726.70px;top:285.68px;width:70px;color:#3a3a3a;transform:scaleX(0.98)">memberforex.com[sl]</div><svg class="a" style="left:0;top:285.68px" width="10" height="9"><path d="M1.6 1.2 H4.6 L6.2 2.8 V7.6 H1.6 Z" fill="#fff" stroke="#6a6a6a" stroke-width="0.65"/><path d="M4.4 1.2 V3 H6.2" fill="none" stroke="#6a6a6a" stroke-width="0.5"/><circle cx="5.5" cy="6.9" r="1.55" fill="#e0502a"/><rect x="9" y="1.3" width="1" height="1.8" fill="#e6d9a0"/></svg><div class="row" style="top:294.14px;background:#ffffff"></div><div class="sl" style="top:294.14px"></div><div class="cell" style="left:13.3px;top:294.14px;width:40px;text-align:left;color:#34465a;transform-origin:0 50%">650839</div><div class="cell" style="left:78.10px;top:294.14px;width:70px;color:#3a3a3a">2025.04.19 15:10:47</div><div class="cell" style="left:121.10px;top:294.14px;width:70px;color:#3a3a3a;transform:scaleX(0.98)">sell</div><div class="cell" style="left:154.70px;top:294.14px;width:70px;color:#3a3a3a">65.28</div><div class="cell" style="left:197.30px;top:294.14px;width:70px;color:#3a3a3a;transform:scaleX(0.98)">btcusdp</div><div class="cell" style="left:240.45px;top:294.14px;width:70px;color:#3a3a3a">85247.50</div><div class="cell" style="left:283.20px;top:294.14px;width:70px;color:#222">85244.50</div><div class="cell" style="left:326.45px;top:294.14px;width:70px;color:#3a3a3a">84640.69</div><div class="cell" style="left:420.20px;top:294.14px;width:70px;color:#3a3a3a">2025.04.19 15:10:57</div><div class="cell" style="left:463.10px;top:294.14px;width:70px;color:#3a3a3a">85244.50</div><div class="cell" style="left:505.40px;top:294.14px;width:70px;color:#3a3a3a">-261.12</div><div class="cell" style="left:548.30px;top:294.14px;width:70px;color:#3a3a3a">0.00</div><div class="cell" style="left:595.20px;top:294.14px;width:70px;color:#3a3a3a">195.84</div><div class="cell" style="left:726.70px;top:294.14px;width:70px;color:#3a3a3a;transform:scaleX(0.98)">memberforex.com[sl]</div><svg class="a" style="left:0;top:294.14px" width="10" height="9"><path d="M1.6 1.2 H4.6 L6.2 2.8 V7.6 H1.6 Z" fill="#fff" stroke="#6a6a6a" stroke-width="0.65"/><path d="M4.4 1.2 V3 H6.2" fill="none" stroke="#6a6a6a" stroke-width="0.5"/><circle cx="5.5" cy="6.9" r="1.55" fill="#e0502a"/><rect x="9" y="1.3" width="1" height="1.8" fill="#e6d9a0"/></svg><div class="row" style="top:302.60px;background:#ebebeb"></div><div class="sl" style="top:302.60px"></div><div class="cell" style="left:13.3px;top:302.60px;width:40px;text-align:left;color:#34465a;transform-origin:0 50%">650839</div><div class="cell" style="left:78.10px;top:302.60px;width:70px;color:#3a3a3a">2025.04.19 15:09:33</div><div class="cell" style="left:121.10px;top:302.60px;width:70px;color:#3a3a3a;transform:scaleX(0.98)">sell</div><div class="cell" style="left:154.70px;top:302.60px;width:70px;color:#3a3a3a">65.30</div><div class="cell" style="left:197.30px;top:302.60px;width:70px;color:#3a3a3a;transform:scaleX(0.98)">btcusdp</div><div class="cell" style="left:240.45px;top:302.60px;width:70px;color:#3a3a3a">85249.80</div><div class="cell" style="left:283.20px;top:302.60px;width:70px;color:#222">85248.00</div><div class="cell" style="left:326.45px;top:302.60px;width:70px;color:#3a3a3a">84644.19</div><div class="cell" style="left:420.20px;top:302.60px;width:70px;color:#3a3a3a">2025.04.19 15:10:21</div><div class="cell" style="left:463.10px;top:302.60px;width:70px;color:#3a3a3a">85248.00</div><div class="cell" style="left:505.40px;top:302.60px;width:70px;color:#3a3a3a">-261.20</div><div class="cell" style="left:548.30px;top:302.60px;width:70px;color:#3a3a3a">0.00</div><div class="cell" style="left:595.20px;top:302.60px;width:70px;color:#3a3a3a">117.54</div><div class="cell" style="left:726.70px;top:302.60px;width:70px;color:#3a3a3a;transform:scaleX(0.98)">memberforex.com[sl]</div><svg class="a" style="left:0;top:302.60px" width="10" height="9"><path d="M1.6 1.2 H4.6 L6.2 2.8 V7.6 H1.6 Z" fill="#fff" stroke="#6a6a6a" stroke-width="0.65"/><path d="M4.4 1.2 V3 H6.2" fill="none" stroke="#6a6a6a" stroke-width="0.5"/><circle cx="5.5" cy="6.9" r="1.55" fill="#e0502a"/><rect x="9" y="1.3" width="1" height="1.8" fill="#e6d9a0"/></svg><div class="row" style="top:311.06px;background:#ffffff"></div><div class="sl" style="top:311.06px"></div><div class="cell" style="left:13.3px;top:311.06px;width:40px;text-align:left;color:#34465a;transform-origin:0 50%">650838</div><div class="cell" style="left:78.10px;top:311.06px;width:70px;color:#3a3a3a">2025.04.19 15:09:16</div><div class="cell" style="left:121.10px;top:311.06px;width:70px;color:#3a3a3a;transform:scaleX(0.98)">sell</div><div class="cell" style="left:154.70px;top:311.06px;width:70px;color:#3a3a3a">65.32</div><div class="cell" style="left:197.30px;top:311.06px;width:70px;color:#3a3a3a;transform:scaleX(0.98)">btcusdp</div><div class="cell" style="left:240.45px;top:311.06px;width:70px;color:#3a3a3a">85249.80</div><div class="cell" style="left:283.20px;top:311.06px;width:70px;color:#222">85249.70</div><div class="cell" style="left:326.45px;top:311.06px;width:70px;color:#3a3a3a">84645.89</div><div class="cell" style="left:420.20px;top:311.06px;width:70px;color:#3a3a3a">2025.04.19 15:09:23</div><div class="cell" style="left:463.10px;top:311.06px;width:70px;color:#3a3a3a">85249.70</div><div class="cell" style="left:505.40px;top:311.06px;width:70px;color:#3a3a3a">-261.28</div><div class="cell" style="left:548.30px;top:311.06px;width:70px;color:#3a3a3a">0.00</div><div class="cell" style="left:595.20px;top:311.06px;width:70px;color:#3a3a3a">6.53</div><div class="cell" style="left:726.70px;top:311.06px;width:70px;color:#3a3a3a;transform:scaleX(0.98)">memberforex.com[sl]</div><svg class="a" style="left:0;top:311.06px" width="10" height="9"><path d="M1.6 1.2 H4.6 L6.2 2.8 V7.6 H1.6 Z" fill="#fff" stroke="#6a6a6a" stroke-width="0.65"/><path d="M4.4 1.2 V3 H6.2" fill="none" stroke="#6a6a6a" stroke-width="0.5"/><circle cx="5.5" cy="6.9" r="1.55" fill="#e0502a"/><rect x="9" y="1.3" width="1" height="1.8" fill="#e6d9a0"/></svg><div class="row" style="top:319.52px;background:#ebebeb"></div><div class="sl" style="top:319.52px"></div><div class="cell" style="left:13.3px;top:319.52px;width:40px;text-align:left;color:#34465a;transform-origin:0 50%">650838</div><div class="cell" style="left:78.10px;top:319.52px;width:70px;color:#3a3a3a">2025.04.19 15:03:05</div><div class="cell" style="left:121.10px;top:319.52px;width:70px;color:#3a3a3a;transform:scaleX(0.98)">sell</div><div class="cell" style="left:154.70px;top:319.52px;width:70px;color:#3a3a3a">65.33</div><div class="cell" style="left:197.30px;top:319.52px;width:70px;color:#3a3a3a;transform:scaleX(0.98)">btcusdp</div><div class="cell" style="left:240.45px;top:319.52px;width:70px;color:#3a3a3a">85197.40</div><div class="cell" style="left:283.20px;top:319.52px;width:70px;color:#222">85195.10</div><div class="cell" style="left:326.45px;top:319.52px;width:70px;color:#3a3a3a">84591.29</div><div class="cell" style="left:420.20px;top:319.52px;width:70px;color:#3a3a3a">2025.04.19 15:04:10</div><div class="cell" style="left:463.10px;top:319.52px;width:70px;color:#3a3a3a">85195.10</div><div class="cell" style="left:505.40px;top:319.52px;width:70px;color:#3a3a3a">-261.32</div><div class="cell" style="left:548.30px;top:319.52px;width:70px;color:#3a3a3a">0.00</div><div class="cell" style="left:595.20px;top:319.52px;width:70px;color:#3a3a3a">150.26</div><div class="cell" style="left:726.70px;top:319.52px;width:70px;color:#3a3a3a;transform:scaleX(0.98)">memberforex.com[sl]</div><svg class="a" style="left:0;top:319.52px" width="10" height="9"><path d="M1.6 1.2 H4.6 L6.2 2.8 V7.6 H1.6 Z" fill="#fff" stroke="#6a6a6a" stroke-width="0.65"/><path d="M4.4 1.2 V3 H6.2" fill="none" stroke="#6a6a6a" stroke-width="0.5"/><circle cx="5.5" cy="6.9" r="1.55" fill="#e0502a"/><rect x="9" y="1.3" width="1" height="1.8" fill="#e6d9a0"/></svg><div class="row" style="top:327.98px;background:#ffffff"></div><div class="sl" style="top:327.98px"></div><div class="cell" style="left:13.3px;top:327.98px;width:40px;text-align:left;color:#34465a;transform-origin:0 50%">650837</div><div class="cell" style="left:78.10px;top:327.98px;width:70px;color:#3a3a3a">2025.04.19 14:57:17</div><div class="cell" style="left:121.10px;top:327.98px;width:70px;color:#3a3a3a;transform:scaleX(0.98)">sell</div><div class="cell" style="left:154.70px;top:327.98px;width:70px;color:#3a3a3a">65.35</div><div class="cell" style="left:197.30px;top:327.98px;width:70px;color:#3a3a3a;transform:scaleX(0.98)">btcusdp</div><div class="cell" style="left:240.45px;top:327.98px;width:70px;color:#3a3a3a">85183.40</div><div class="cell" style="left:283.20px;top:327.98px;width:70px;color:#222">85181.80</div><div class="cell" style="left:326.45px;top:327.98px;width:70px;color:#3a3a3a">84577.99</div><div class="cell" style="left:420.20px;top:327.98px;width:70px;color:#3a3a3a">2025.04.19 14:57:51</div><div class="cell" style="left:463.10px;top:327.98px;width:70px;color:#3a3a3a">85181.80</div><div class="cell" style="left:505.40px;top:327.98px;width:70px;color:#3a3a3a">-261.40</div><div class="cell" style="left:548.30px;top:327.98px;width:70px;color:#3a3a3a">0.00</div><div class="cell" style="left:595.20px;top:327.98px;width:70px;color:#3a3a3a">104.56</div><div class="cell" style="left:726.70px;top:327.98px;width:70px;color:#3a3a3a;transform:scaleX(0.98)">memberforex.com[sl]</div><svg class="a" style="left:0;top:327.98px" width="10" height="9"><path d="M1.6 1.2 H4.6 L6.2 2.8 V7.6 H1.6 Z" fill="#fff" stroke="#6a6a6a" stroke-width="0.65"/><path d="M4.4 1.2 V3 H6.2" fill="none" stroke="#6a6a6a" stroke-width="0.5"/><circle cx="5.5" cy="6.9" r="1.55" fill="#e0502a"/><rect x="9" y="1.3" width="1" height="1.8" fill="#e6d9a0"/></svg><div class="row" style="top:336.44px;background:#0078d7"></div><div class="sl" style="top:336.44px;border-top:0.8px solid #8a9cb8;border-bottom:0.8px solid #8a9cb8"></div><div class="cell" style="left:13.3px;top:336.44px;width:40px;text-align:left;color:#fff;transform-origin:0 50%">650840</div><div class="cell" style="left:78.10px;top:336.44px;width:70px;color:#fff">2025.04.19 15:12:55</div><div class="cell" style="left:121.10px;top:336.44px;width:70px;color:#fff;transform:scaleX(0.98)">sell</div><div class="cell" style="left:154.70px;top:336.44px;width:70px;color:#fff">65.39</div><div class="cell" style="left:197.30px;top:336.44px;width:70px;color:#fff;transform:scaleX(0.98)">btcusdp</div><div class="cell" style="left:240.45px;top:336.44px;width:70px;color:#fff">85231.50</div><div class="cell" style="left:283.20px;top:336.44px;width:70px;color:#222">85208.70</div><div class="cell" style="left:326.45px;top:336.44px;width:70px;color:#fff">84604.89</div><div class="cell" style="left:420.20px;top:336.44px;width:70px;color:#fff">2025.04.19 15:14:03</div><div class="cell" style="left:463.10px;top:336.44px;width:70px;color:#fff">85208.70</div><div class="cell" style="left:505.40px;top:336.44px;width:70px;color:#fff">-261.56</div><div class="cell" style="left:548.30px;top:336.44px;width:70px;color:#fff">0.00</div><div class="cell" style="left:595.20px;top:336.44px;width:70px;color:#fff">1 490.89</div><div class="cell" style="left:726.70px;top:336.44px;width:70px;color:#fff;transform:scaleX(0.98)">memberforex.com[sl]</div><svg class="a" style="left:0;top:336.44px" width="10" height="9"><path d="M1.6 1.2 H4.6 L6.2 2.8 V7.6 H1.6 Z" fill="#fff" stroke="#6a6a6a" stroke-width="0.65"/><path d="M4.4 1.2 V3 H6.2" fill="none" stroke="#6a6a6a" stroke-width="0.5"/><circle cx="5.5" cy="6.9" r="1.55" fill="#e0502a"/><rect x="9" y="1.3" width="1" height="1.8" fill="#e6d9a0"/></svg><div class="row" style="top:344.90px;background:#ffffff"></div><div class="sl" style="top:344.90px"></div><div class="cell" style="left:13.3px;top:344.90px;width:40px;text-align:left;color:#34465a;transform-origin:0 50%">650840</div><div class="cell" style="left:78.10px;top:344.90px;width:70px;color:#3a3a3a">2025.04.19 15:19:40</div><div class="cell" style="left:121.10px;top:344.90px;width:70px;color:#3a3a3a;transform:scaleX(0.98)">sell</div><div class="cell" style="left:154.70px;top:344.90px;width:70px;color:#3a3a3a">65.51</div><div class="cell" style="left:197.30px;top:344.90px;width:70px;color:#3a3a3a;transform:scaleX(0.98)">btcusdp</div><div class="cell" style="left:240.45px;top:344.90px;width:70px;color:#3a3a3a">85254.50</div><div class="cell" style="left:283.20px;top:344.90px;width:70px;color:#222">85182.80</div><div class="cell" style="left:326.45px;top:344.90px;width:70px;color:#3a3a3a">84578.99</div><div class="cell" style="left:420.20px;top:344.90px;width:70px;color:#3a3a3a">2025.04.19 15:20:47</div><div class="cell" style="left:463.10px;top:344.90px;width:70px;color:#3a3a3a">85182.80</div><div class="cell" style="left:505.40px;top:344.90px;width:70px;color:#3a3a3a">-262.04</div><div class="cell" style="left:548.30px;top:344.90px;width:70px;color:#3a3a3a">0.00</div><div class="cell" style="left:595.20px;top:344.90px;width:70px;color:#3a3a3a">4 697.07</div><div class="cell" style="left:726.70px;top:344.90px;width:70px;color:#3a3a3a;transform:scaleX(0.98)">memberforex.com[sl]</div><svg class="a" style="left:0;top:344.90px" width="10" height="9"><path d="M1.6 1.2 H4.6 L6.2 2.8 V7.6 H1.6 Z" fill="#fff" stroke="#6a6a6a" stroke-width="0.65"/><path d="M4.4 1.2 V3 H6.2" fill="none" stroke="#6a6a6a" stroke-width="0.5"/><circle cx="5.5" cy="6.9" r="1.55" fill="#e0502a"/><rect x="9" y="1.3" width="1" height="1.8" fill="#e6d9a0"/></svg><div class="row" style="top:353.36px;background:#ebebeb"></div><div class="sl" style="top:353.36px"></div><div class="cell" style="left:13.3px;top:353.36px;width:40px;text-align:left;color:#34465a;transform-origin:0 50%">650841</div><div class="cell" style="left:78.10px;top:353.36px;width:70px;color:#3a3a3a">2025.04.19 15:21:18</div><div class="cell" style="left:121.10px;top:353.36px;width:70px;color:#3a3a3a;transform:scaleX(0.98)">buy</div><div class="cell" style="left:154.70px;top:353.36px;width:70px;color:#3a3a3a">65.95</div><div class="cell" style="left:197.30px;top:353.36px;width:70px;color:#3a3a3a;transform:scaleX(0.98)">btcusdp</div><div class="cell" style="left:240.45px;top:353.36px;width:70px;color:#3a3a3a">85163.60</div><div class="cell" style="left:283.20px;top:353.36px;width:70px;color:#222">85263.00</div><div class="cell" style="left:326.45px;top:353.36px;width:70px;color:#3a3a3a">85866.81</div><div class="cell" style="left:420.20px;top:353.36px;width:70px;color:#3a3a3a">2025.04.19 15:25:59</div><div class="cell" style="left:463.10px;top:353.36px;width:70px;color:#3a3a3a">85263.00</div><div class="cell" style="left:505.40px;top:353.36px;width:70px;color:#3a3a3a">-263.80</div><div class="cell" style="left:548.30px;top:353.36px;width:70px;color:#3a3a3a">0.00</div><div class="cell" style="left:595.20px;top:353.36px;width:70px;color:#3a3a3a">6 555.43</div><div class="cell" style="left:726.70px;top:353.36px;width:70px;color:#3a3a3a;transform:scaleX(0.98)">memberforex.com[sl]</div><svg class="a" style="left:0;top:353.36px" width="10" height="9"><path d="M1.6 1.2 H4.6 L6.2 2.8 V7.6 H1.6 Z" fill="#fff" stroke="#6a6a6a" stroke-width="0.65"/><path d="M4.4 1.2 V3 H6.2" fill="none" stroke="#6a6a6a" stroke-width="0.5"/><circle cx="5.5" cy="6.9" r="1.55" fill="#2a8ae0"/><rect x="9" y="1.3" width="1" height="1.8" fill="#e6d9a0"/></svg><div class="row" style="top:361.82px;background:#ffffff"></div><div class="sl" style="top:361.82px"></div><div class="cell" style="left:13.3px;top:361.82px;width:40px;text-align:left;color:#34465a;transform-origin:0 50%">650840</div><div class="cell" style="left:78.10px;top:361.82px;width:70px;color:#3a3a3a">2025.04.19 15:34:35</div><div class="cell" style="left:121.10px;top:361.82px;width:70px;color:#3a3a3a;transform:scaleX(0.98)">sell</div><div class="cell" style="left:154.70px;top:361.82px;width:70px;color:#3a3a3a">66.55</div><div class="cell" style="left:197.30px;top:361.82px;width:70px;color:#3a3a3a;transform:scaleX(0.98)">btcusdp</div><div class="cell" style="left:240.45px;top:361.82px;width:70px;color:#3a3a3a">85276.80</div><div class="cell" style="left:283.20px;top:361.82px;width:70px;color:#222">85264.30</div><div class="cell" style="left:326.45px;top:361.82px;width:70px;color:#3a3a3a">84660.49</div><div class="cell" style="left:420.20px;top:361.82px;width:70px;color:#3a3a3a">2025.04.19 15:35:06</div><div class="cell" style="left:463.10px;top:361.82px;width:70px;color:#3a3a3a">85264.30</div><div class="cell" style="left:505.40px;top:361.82px;width:70px;color:#3a3a3a">-266.20</div><div class="cell" style="left:548.30px;top:361.82px;width:70px;color:#3a3a3a">0.00</div><div class="cell" style="left:595.20px;top:361.82px;width:70px;color:#3a3a3a">831.88</div><div class="cell" style="left:726.70px;top:361.82px;width:70px;color:#3a3a3a;transform:scaleX(0.98)">memberforex.com[sl]</div><svg class="a" style="left:0;top:361.82px" width="10" height="9"><path d="M1.6 1.2 H4.6 L6.2 2.8 V7.6 H1.6 Z" fill="#fff" stroke="#6a6a6a" stroke-width="0.65"/><path d="M4.4 1.2 V3 H6.2" fill="none" stroke="#6a6a6a" stroke-width="0.5"/><circle cx="5.5" cy="6.9" r="1.55" fill="#e0502a"/><rect x="9" y="1.3" width="1" height="1.8" fill="#e6d9a0"/></svg><div class="row" style="top:370.28px;background:#ebebeb"></div><div class="sl" style="top:370.28px"></div><div class="cell" style="left:13.3px;top:370.28px;width:40px;text-align:left;color:#34465a;transform-origin:0 50%">650842</div><div class="cell" style="left:78.10px;top:370.28px;width:70px;color:#3a3a3a">2025.04.19 15:30:17</div><div class="cell" style="left:121.10px;top:370.28px;width:70px;color:#3a3a3a;transform:scaleX(0.98)">sell</div><div class="cell" style="left:154.70px;top:370.28px;width:70px;color:#3a3a3a">66.56</div><div class="cell" style="left:197.30px;top:370.28px;width:70px;color:#3a3a3a;transform:scaleX(0.98)">btcusdp</div><div class="cell" style="left:240.45px;top:370.28px;width:70px;color:#3a3a3a">85276.80</div><div class="cell" style="left:283.20px;top:370.28px;width:70px;color:#222">85274.00</div><div class="cell" style="left:326.45px;top:370.28px;width:70px;color:#3a3a3a">84670.19</div><div class="cell" style="left:420.20px;top:370.28px;width:70px;color:#3a3a3a">2025.04.19 15:31:57</div><div class="cell" style="left:463.10px;top:370.28px;width:70px;color:#3a3a3a">85274.00</div><div class="cell" style="left:505.40px;top:370.28px;width:70px;color:#3a3a3a">-266.24</div><div class="cell" style="left:548.30px;top:370.28px;width:70px;color:#3a3a3a">0.00</div><div class="cell" style="left:595.20px;top:370.28px;width:70px;color:#3a3a3a">186.37</div><div class="cell" style="left:726.70px;top:370.28px;width:70px;color:#3a3a3a;transform:scaleX(0.98)">memberforex.com[sl]</div><svg class="a" style="left:0;top:370.28px" width="10" height="9"><path d="M1.6 1.2 H4.6 L6.2 2.8 V7.6 H1.6 Z" fill="#fff" stroke="#6a6a6a" stroke-width="0.65"/><path d="M4.4 1.2 V3 H6.2" fill="none" stroke="#6a6a6a" stroke-width="0.5"/><circle cx="5.5" cy="6.9" r="1.55" fill="#e0502a"/><rect x="9" y="1.3" width="1" height="1.8" fill="#e6d9a0"/></svg><div class="row" style="top:378.74px;background:#ffffff"></div><div class="sl" style="top:378.74px"></div><div class="cell" style="left:13.3px;top:378.74px;width:40px;text-align:left;color:#34465a;transform-origin:0 50%">650842</div><div class="cell" style="left:78.10px;top:378.74px;width:70px;color:#3a3a3a">2025.04.19 15:26:02</div><div class="cell" style="left:121.10px;top:378.74px;width:70px;color:#3a3a3a;transform:scaleX(0.98)">sell</div><div class="cell" style="left:154.70px;top:378.74px;width:70px;color:#3a3a3a">66.56</div><div class="cell" style="left:197.30px;top:378.74px;width:70px;color:#3a3a3a;transform:scaleX(0.98)">btcusdp</div><div class="cell" style="left:240.45px;top:378.74px;width:70px;color:#3a3a3a">85254.40</div><div class="cell" style="left:283.20px;top:378.74px;width:70px;color:#222">85251.00</div><div class="cell" style="left:326.45px;top:378.74px;width:70px;color:#3a3a3a">84647.19</div><div class="cell" style="left:420.20px;top:378.74px;width:70px;color:#3a3a3a">2025.04.19 15:26:42</div><div class="cell" style="left:463.10px;top:378.74px;width:70px;color:#3a3a3a">85251.00</div><div class="cell" style="left:505.40px;top:378.74px;width:70px;color:#3a3a3a">-266.24</div><div class="cell" style="left:548.30px;top:378.74px;width:70px;color:#3a3a3a">0.00</div><div class="cell" style="left:595.20px;top:378.74px;width:70px;color:#3a3a3a">226.30</div><div class="cell" style="left:726.70px;top:378.74px;width:70px;color:#3a3a3a;transform:scaleX(0.98)">memberforex.com[sl]</div><svg class="a" style="left:0;top:378.74px" width="10" height="9"><path d="M1.6 1.2 H4.6 L6.2 2.8 V7.6 H1.6 Z" fill="#fff" stroke="#6a6a6a" stroke-width="0.65"/><path d="M4.4 1.2 V3 H6.2" fill="none" stroke="#6a6a6a" stroke-width="0.5"/><circle cx="5.5" cy="6.9" r="1.55" fill="#e0502a"/><rect x="9" y="1.3" width="1" height="1.8" fill="#e6d9a0"/></svg><div class="row" style="top:387.20px;background:#ebebeb"></div><div class="sl" style="top:387.20px"></div><div class="cell" style="left:13.3px;top:387.20px;width:40px;text-align:left;color:#34465a;transform-origin:0 50%">650843</div><div class="cell" style="left:78.10px;top:387.20px;width:70px;color:#3a3a3a">2025.04.19 15:37:21</div><div class="cell" style="left:121.10px;top:387.20px;width:70px;color:#3a3a3a;transform:scaleX(0.98)">sell</div><div class="cell" style="left:154.70px;top:387.20px;width:70px;color:#3a3a3a">66.61</div><div class="cell" style="left:197.30px;top:387.20px;width:70px;color:#3a3a3a;transform:scaleX(0.98)">btcusdp</div><div class="cell" style="left:240.45px;top:387.20px;width:70px;color:#3a3a3a">85275.00</div><div class="cell" style="left:283.20px;top:387.20px;width:70px;color:#222">85263.70</div><div class="cell" style="left:326.45px;top:387.20px;width:70px;color:#3a3a3a">84659.89</div><div class="cell" style="left:420.20px;top:387.20px;width:70px;color:#3a3a3a">2025.04.19 15:41:57</div><div class="cell" style="left:463.10px;top:387.20px;width:70px;color:#3a3a3a">85263.70</div><div class="cell" style="left:505.40px;top:387.20px;width:70px;color:#3a3a3a">-266.44</div><div class="cell" style="left:548.30px;top:387.20px;width:70px;color:#3a3a3a">0.00</div><div class="cell" style="left:595.20px;top:387.20px;width:70px;color:#3a3a3a">752.69</div><div class="cell" style="left:726.70px;top:387.20px;width:70px;color:#3a3a3a;transform:scaleX(0.98)">memberforex.com[sl]</div><svg class="a" style="left:0;top:387.20px" width="10" height="9"><path d="M1.6 1.2 H4.6 L6.2 2.8 V7.6 H1.6 Z" fill="#fff" stroke="#6a6a6a" stroke-width="0.65"/><path d="M4.4 1.2 V3 H6.2" fill="none" stroke="#6a6a6a" stroke-width="0.5"/><circle cx="5.5" cy="6.9" r="1.55" fill="#e0502a"/><rect x="9" y="1.3" width="1" height="1.8" fill="#e6d9a0"/></svg><div class="row" style="top:395.66px;background:#ffffff"></div><div class="sl" style="top:395.66px"></div><div class="cell" style="left:13.3px;top:395.66px;width:40px;text-align:left;color:#34465a;transform-origin:0 50%">650843</div><div class="cell" style="left:78.10px;top:395.66px;width:70px;color:#3a3a3a">2025.04.19 15:42:41</div><div class="cell" style="left:121.10px;top:395.66px;width:70px;color:#3a3a3a;transform:scaleX(0.98)">sell</div><div class="cell" style="left:154.70px;top:395.66px;width:70px;color:#3a3a3a">66.66</div><div class="cell" style="left:197.30px;top:395.66px;width:70px;color:#3a3a3a;transform:scaleX(0.98)">btcusdp</div><div class="cell" style="left:240.45px;top:395.66px;width:70px;color:#3a3a3a">85277.40</div><div class="cell" style="left:283.20px;top:395.66px;width:70px;color:#222">85257.70</div><div class="cell" style="left:326.45px;top:395.66px;width:70px;color:#3a3a3a">84653.89</div><div class="cell" style="left:420.20px;top:395.66px;width:70px;color:#3a3a3a">2025.04.19 15:45:00</div><div class="cell" style="left:463.10px;top:395.66px;width:70px;color:#3a3a3a">85257.70</div><div class="cell" style="left:505.40px;top:395.66px;width:70px;color:#3a3a3a">-266.64</div><div class="cell" style="left:548.30px;top:395.66px;width:70px;color:#3a3a3a">0.00</div><div class="cell" style="left:595.20px;top:395.66px;width:70px;color:#3a3a3a">1 313.20</div><div class="cell" style="left:726.70px;top:395.66px;width:70px;color:#3a3a3a;transform:scaleX(0.98)">memberforex.com[sl]</div><svg class="a" style="left:0;top:395.66px" width="10" height="9"><path d="M1.6 1.2 H4.6 L6.2 2.8 V7.6 H1.6 Z" fill="#fff" stroke="#6a6a6a" stroke-width="0.65"/><path d="M4.4 1.2 V3 H6.2" fill="none" stroke="#6a6a6a" stroke-width="0.5"/><circle cx="5.5" cy="6.9" r="1.55" fill="#e0502a"/><rect x="9" y="1.3" width="1" height="1.8" fill="#e6d9a0"/></svg><div class="row" style="top:404.12px;background:#ebebeb"></div><div class="sl" style="top:404.12px"></div><div class="cell" style="left:13.3px;top:404.12px;width:40px;text-align:left;color:#34465a;transform-origin:0 50%">650840</div><div class="cell" style="left:78.10px;top:404.12px;width:70px;color:#3a3a3a">2025.04.19 15:46:49</div><div class="cell" style="left:121.10px;top:404.12px;width:70px;color:#3a3a3a;transform:scaleX(0.98)">sell</div><div class="cell" style="left:154.70px;top:404.12px;width:70px;color:#3a3a3a">66.76</div><div class="cell" style="left:197.30px;top:404.12px;width:70px;color:#3a3a3a;transform:scaleX(0.98)">btcusdp</div><div class="cell" style="left:240.45px;top:404.12px;width:70px;color:#3a3a3a">85273.30</div><div class="cell" style="left:283.20px;top:404.12px;width:70px;color:#222">85175.50</div><div class="cell" style="left:326.45px;top:404.12px;width:70px;color:#3a3a3a">84571.69</div><div class="cell" style="left:420.20px;top:404.12px;width:70px;color:#3a3a3a">2025.04.19 15:48:41</div><div class="cell" style="left:463.10px;top:404.12px;width:70px;color:#3a3a3a">85175.50</div><div class="cell" style="left:505.40px;top:404.12px;width:70px;color:#3a3a3a">-267.04</div><div class="cell" style="left:548.30px;top:404.12px;width:70px;color:#3a3a3a">0.00</div><div class="cell" style="left:595.20px;top:404.12px;width:70px;color:#3a3a3a">6 529.13</div><div class="cell" style="left:726.70px;top:404.12px;width:70px;color:#3a3a3a;transform:scaleX(0.98)">memberforex.com[sl]</div><svg class="a" style="left:0;top:404.12px" width="10" height="9"><path d="M1.6 1.2 H4.6 L6.2 2.8 V7.6 H1.6 Z" fill="#fff" stroke="#6a6a6a" stroke-width="0.65"/><path d="M4.4 1.2 V3 H6.2" fill="none" stroke="#6a6a6a" stroke-width="0.5"/><circle cx="5.5" cy="6.9" r="1.55" fill="#e0502a"/><rect x="9" y="1.3" width="1" height="1.8" fill="#e6d9a0"/></svg><div class="row" style="top:412.58px;background:#ffffff"></div><div class="sl" style="top:412.58px"></div><div class="cell" style="left:13.3px;top:412.58px;width:40px;text-align:left;color:#34465a;transform-origin:0 50%">650844</div><div class="cell" style="left:78.10px;top:412.58px;width:70px;color:#3a3a3a">2025.04.19 15:48:47</div><div class="cell" style="left:121.10px;top:412.58px;width:70px;color:#3a3a3a;transform:scaleX(0.98)">buy</div><div class="cell" style="left:154.70px;top:412.58px;width:70px;color:#3a3a3a">67.37</div><div class="cell" style="left:197.30px;top:412.58px;width:70px;color:#3a3a3a;transform:scaleX(0.98)">btcusdp</div><div class="cell" style="left:240.45px;top:412.58px;width:70px;color:#3a3a3a">85185.00</div><div class="cell" style="left:283.20px;top:412.58px;width:70px;color:#222">85205.00</div><div class="cell" style="left:326.45px;top:412.58px;width:70px;color:#3a3a3a">85808.81</div><div class="cell" style="left:420.20px;top:412.58px;width:70px;color:#3a3a3a">2025.04.19 15:49:11</div><div class="cell" style="left:463.10px;top:412.58px;width:70px;color:#3a3a3a">85205.00</div><div class="cell" style="left:505.40px;top:412.58px;width:70px;color:#3a3a3a">-269.48</div><div class="cell" style="left:548.30px;top:412.58px;width:70px;color:#3a3a3a">0.00</div><div class="cell" style="left:595.20px;top:412.58px;width:70px;color:#3a3a3a">1 347.40</div><div class="cell" style="left:726.70px;top:412.58px;width:70px;color:#3a3a3a;transform:scaleX(0.98)">memberforex.com[sl]</div><svg class="a" style="left:0;top:412.58px" width="10" height="9"><path d="M1.6 1.2 H4.6 L6.2 2.8 V7.6 H1.6 Z" fill="#fff" stroke="#6a6a6a" stroke-width="0.65"/><path d="M4.4 1.2 V3 H6.2" fill="none" stroke="#6a6a6a" stroke-width="0.5"/><circle cx="5.5" cy="6.9" r="1.55" fill="#2a8ae0"/><rect x="9" y="1.3" width="1" height="1.8" fill="#e6d9a0"/></svg><div class="row" style="top:421.04px;background:#ebebeb"></div><div class="sl" style="top:421.04px"></div><div class="cell" style="left:13.3px;top:421.04px;width:40px;text-align:left;color:#34465a;transform-origin:0 50%">650844</div><div class="cell" style="left:78.10px;top:421.04px;width:70px;color:#3a3a3a">2025.04.19 15:49:30</div><div class="cell" style="left:121.10px;top:421.04px;width:70px;color:#3a3a3a;transform:scaleX(0.98)">buy</div><div class="cell" style="left:154.70px;top:421.04px;width:70px;color:#3a3a3a">67.48</div><div class="cell" style="left:197.30px;top:421.04px;width:70px;color:#3a3a3a;transform:scaleX(0.98)">btcusdp</div><div class="cell" style="left:240.45px;top:421.04px;width:70px;color:#3a3a3a">85190.30</div><div class="cell" style="left:283.20px;top:421.04px;width:70px;color:#222">85217.30</div><div class="cell" style="left:326.45px;top:421.04px;width:70px;color:#3a3a3a">85821.11</div><div class="cell" style="left:420.20px;top:421.04px;width:70px;color:#3a3a3a">2025.04.19 15:50:59</div><div class="cell" style="left:463.10px;top:421.04px;width:70px;color:#3a3a3a">85217.30</div><div class="cell" style="left:505.40px;top:421.04px;width:70px;color:#3a3a3a">-269.92</div><div class="cell" style="left:548.30px;top:421.04px;width:70px;color:#3a3a3a">0.00</div><div class="cell" style="left:595.20px;top:421.04px;width:70px;color:#3a3a3a">1 821.96</div><div class="cell" style="left:726.70px;top:421.04px;width:70px;color:#3a3a3a;transform:scaleX(0.98)">memberforex.com[sl]</div><svg class="a" style="left:0;top:421.04px" width="10" height="9"><path d="M1.6 1.2 H4.6 L6.2 2.8 V7.6 H1.6 Z" fill="#fff" stroke="#6a6a6a" stroke-width="0.65"/><path d="M4.4 1.2 V3 H6.2" fill="none" stroke="#6a6a6a" stroke-width="0.5"/><circle cx="5.5" cy="6.9" r="1.55" fill="#2a8ae0"/><rect x="9" y="1.3" width="1" height="1.8" fill="#e6d9a0"/></svg><div class="a" style="left:797.2px;top:207.5px;width:2.8px;height:221.5px;background:#ededed"></div><div class="vsep" style="left:55.00px"></div><div class="vsep" style="left:148.90px"></div><div class="vsep" style="left:191.90px"></div><div class="vsep" style="left:225.50px"></div><div class="vsep" style="left:268.10px"></div><div class="vsep" style="left:311.25px"></div><div class="vsep" style="left:354.00px"></div><div class="vsep" style="left:397.25px"></div><div class="vsep" style="left:491.00px"></div><div class="vsep" style="left:533.90px"></div><div class="vsep" style="left:576.20px"></div><div class="vsep" style="left:619.10px"></div><div class="vsep" style="left:666.00px"></div><div class="gbar" style="left:10.8px;width:2.3px"></div><div class="gbar" style="left:28.2px;width:2.8px"></div>
<div id="btabs"></div>
<div class="a" style="left:50.5px;top:428.6px;width:44px;height:9.4px;background:#fff;border:0.9px solid #333;border-top:none"></div>
<div class="bt" style="left:5px;color:#888">Trade</div><div class="bsep" style="left:21.5px"></div><div class="bt" style="left:25px;color:#888">Exposure</div><div class="bt" style="left:54px;color:#111">Account History</div><div class="bt" style="left:99px;color:#888">News</div><div class="bsep" style="left:115.8px"></div><div class="bt" style="left:120px;color:#888">Alerts</div><div class="bsep" style="left:137.5px"></div><div class="bt" style="left:141px;color:#888">Mailbox</div><div class="a" style="left:160.5px;top:434px;font-size:3.4px;color:#e02020">6</div><div class="bsep" style="left:166.5px"></div><div class="bt" style="left:171px;color:#888">Market</div><div class="a" style="left:187.5px;top:434px;font-size:3.4px;color:#e02020">120</div><div class="bsep" style="left:198.5px"></div><div class="bt" style="left:202.7px;color:#888">Articles</div><div class="bsep" style="left:223.5px"></div><div class="bt" style="left:227.5px;color:#888">Code Base</div><div class="bsep" style="left:255px"></div><div class="bt" style="left:259px;color:#888">Experts</div><div class="bsep" style="left:280px"></div><div class="bt" style="left:284px;color:#888">Journal</div><div class="bsep" style="left:304.5px"></div>
<div id="status"></div>
<div class="st" style="left:-0.8px">r Help, press F1</div>
<div class="ssep" style="left:504.4px"></div><div class="ssep" style="left:554px"></div><div class="ssep" style="left:597.4px"></div><div class="ssep" style="left:627.6px"></div><div class="ssep" style="left:657.6px"></div><div class="ssep" style="left:686.6px"></div><div class="ssep" style="left:716.6px"></div><div class="ssep" style="left:744px"></div>
<div class="st" style="left:507px">Default</div>
<svg class="a" style="left:746.5px;top:442px" width="10" height="6.5"><rect x="0" y="0.5" width="10" height="6" fill="#7aa040"/><path d="M0 6.5 L0 5 L10 2.2 L10 6.5 Z" fill="#2f6fa8"/><path d="M1.5 0 V6.5 M3 0 V6.5 M4.5 0 V6.5 M6 0 V6.5 M7.5 0 V6.5 M9 0 V6.5" stroke="#e8f0e8" stroke-width="0.45"/></svg>
<div class="st" style="left:758px">322/86 kb</div>
<div class="a" style="left:0;top:449.2px;width:8px;height:0.8px;background:#2a2a2a"></div><div class="a" style="left:117.5px;top:449.2px;width:683px;height:0.8px;background:#444"></div>
</div></body></html>
